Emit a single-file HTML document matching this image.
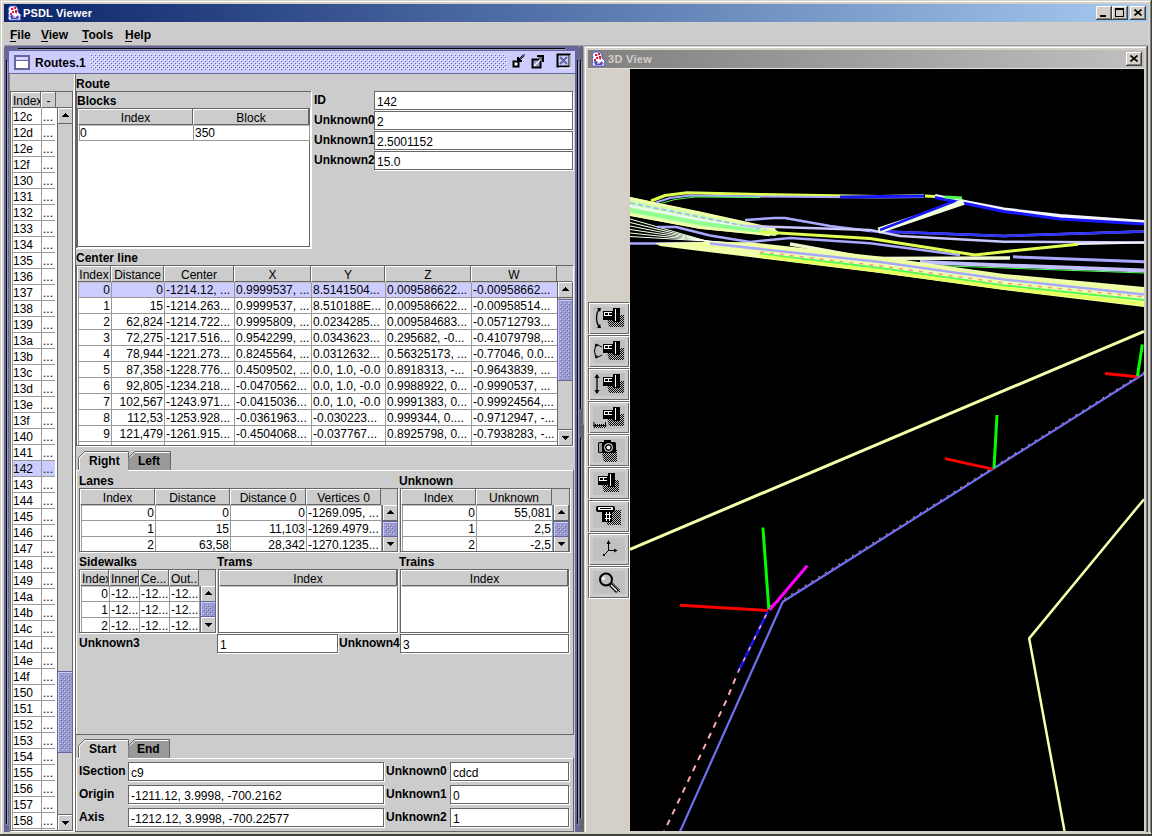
<!DOCTYPE html><html><head><meta charset="utf-8"><style>html,body{margin:0;padding:0;width:1152px;height:836px;overflow:hidden;background:#d4d0c8}body>div,body>svg{position:absolute}div{position:absolute;box-sizing:border-box}.t{font-family:"Liberation Sans",sans-serif;font-size:12px;line-height:16px;white-space:pre;color:#000}</style></head><body><div style="left:0px;top:0px;width:1152px;height:836px;background:#d4d0c8;"></div>
<div style="left:0px;top:0px;width:1151px;height:1px;background:#d4d0c8;"></div>
<div style="left:1px;top:1px;width:1149px;height:1px;background:#ffffff;"></div>
<div style="left:1px;top:1px;width:1px;height:833px;background:#ffffff;"></div>
<div style="left:1151px;top:0px;width:1px;height:836px;background:#404040;"></div>
<div style="left:1150px;top:1px;width:1px;height:834px;background:#808080;"></div>
<div style="left:4px;top:4px;width:1144px;height:18px;background:linear-gradient(to right,#0a246a,#a6caf0);"></div>
<svg style="position:absolute;left:6px;top:5px" width="16" height="16"><path d="M4 1h6l2 3v3l3 3-1 3 1 2H3l-1-2 1-2-1-3 1-2-1-2z" fill="#fff" stroke="#4a5ae0" stroke-width="1"/><path d="M5 3h2v2H5zM8 2h2v2H8zM6 6h2v2H6zM9 5h2v3H9zM4 8h2v2H4z" fill="#e8182a"/><path d="M7 4h1v1H7zM10 8h1v1h-1z" fill="#ff8090"/><path d="M4 11q2-2 4 0t4-1l1 2-1 2H5z" fill="#5a48b0"/><path d="M7 12h3" stroke="#fff" stroke-width="1"/></svg>
<div class="t" style="left:23px;top:5px;font-size:11px;font-weight:bold;color:#fff;letter-spacing:0.15px;">PSDL Viewer</div>
<div style="left:1096px;top:6px;width:16px;height:14px;background:#d4d0c8;"></div>
<div style="left:1096px;top:6px;width:15px;height:1px;background:#ffffff;"></div>
<div style="left:1096px;top:6px;width:1px;height:13px;background:#ffffff;"></div>
<div style="left:1096px;top:19px;width:16px;height:1px;background:#404040;"></div>
<div style="left:1111px;top:6px;width:1px;height:14px;background:#404040;"></div>
<div style="left:1097px;top:18px;width:14px;height:1px;background:#808080;"></div>
<div style="left:1110px;top:7px;width:1px;height:12px;background:#808080;"></div>
<div style="left:1100px;top:15px;width:6px;height:2px;background:#000;"></div>
<div style="left:1112px;top:6px;width:16px;height:14px;background:#d4d0c8;"></div>
<div style="left:1112px;top:6px;width:15px;height:1px;background:#ffffff;"></div>
<div style="left:1112px;top:6px;width:1px;height:13px;background:#ffffff;"></div>
<div style="left:1112px;top:19px;width:16px;height:1px;background:#404040;"></div>
<div style="left:1127px;top:6px;width:1px;height:14px;background:#404040;"></div>
<div style="left:1113px;top:18px;width:14px;height:1px;background:#808080;"></div>
<div style="left:1126px;top:7px;width:1px;height:12px;background:#808080;"></div>
<div style="left:1115px;top:8px;width:9px;height:9px;border:1px solid #000;border-top-width:2px;box-sizing:border-box;"></div>
<div style="left:1130px;top:6px;width:16px;height:14px;background:#d4d0c8;"></div>
<div style="left:1130px;top:6px;width:15px;height:1px;background:#ffffff;"></div>
<div style="left:1130px;top:6px;width:1px;height:13px;background:#ffffff;"></div>
<div style="left:1130px;top:19px;width:16px;height:1px;background:#404040;"></div>
<div style="left:1145px;top:6px;width:1px;height:14px;background:#404040;"></div>
<div style="left:1131px;top:18px;width:14px;height:1px;background:#808080;"></div>
<div style="left:1144px;top:7px;width:1px;height:12px;background:#808080;"></div>
<svg style="position:absolute;left:1134px;top:9px" width="8" height="7"><path d="M0.5 0.5L7.5 6.5M7.5 0.5L0.5 6.5" stroke="#000" stroke-width="1.6"/></svg>
<div style="left:4px;top:23px;width:1144px;height:22px;background:#cccccc;"></div>
<div class="t" style="left:10px;top:27px;font-weight:bold;">File</div>
<div class="t" style="left:41px;top:27px;font-weight:bold;">View</div>
<div class="t" style="left:82px;top:27px;font-weight:bold;">Tools</div>
<div class="t" style="left:125px;top:27px;font-weight:bold;">Help</div>
<div style="left:10px;top:41px;width:6px;height:1px;background:#000;"></div>
<div style="left:41px;top:41px;width:7px;height:1px;background:#000;"></div>
<div style="left:82px;top:41px;width:6px;height:1px;background:#000;"></div>
<div style="left:125px;top:41px;width:7px;height:1px;background:#000;"></div>
<div style="left:4px;top:45px;width:1144px;height:1px;background:#999999;"></div>
<div style="left:4px;top:46px;width:576px;height:786px;background:#666699;"></div>
<div style="left:4px;top:46px;width:1px;height:1px;background:#cccccc;"></div>
<div style="left:579px;top:46px;width:1px;height:1px;background:#cccccc;"></div>
<div style="left:18px;top:48px;width:547px;height:1px;background:#000;"></div>
<div style="left:19px;top:49px;width:547px;height:1px;background:#9999cc;"></div>
<div style="left:6px;top:60px;width:1px;height:764px;background:#000;"></div>
<div style="left:7px;top:61px;width:1px;height:764px;background:#9999cc;"></div>
<div style="left:577px;top:60px;width:1px;height:764px;background:#000;"></div>
<div style="left:578px;top:61px;width:1px;height:764px;background:#9999cc;"></div>
<div style="left:9px;top:51px;width:566px;height:22px;background:#ccccff;"></div>
<div style="left:9px;top:73px;width:566px;height:1px;background:#666699;"></div>
<div style="left:14px;top:55px;width:16px;height:15px;background:#666699;"></div>
<div style="left:15px;top:56px;width:14px;height:13px;background:#666699;border-radius:1px;"></div>
<div style="left:16px;top:57px;width:12px;height:3px;background:#ccccff;"></div>
<div style="left:17px;top:58px;width:1px;height:1px;background:#ffffff;"></div>
<div style="left:20px;top:58px;width:1px;height:1px;background:#ffffff;"></div>
<div style="left:23px;top:58px;width:1px;height:1px;background:#ffffff;"></div>
<div style="left:26px;top:58px;width:1px;height:1px;background:#ffffff;"></div>
<div style="left:16px;top:61px;width:12px;height:7px;background:#ffffff;"></div>
<div class="t" style="left:35px;top:55px;font-weight:bold;">Routes.1</div>
<svg style="position:absolute;left:90px;top:54px;width:417px;height:16px;background:#ccccff;" width="417" height="16"><defs><pattern id="tb" width="4" height="4" patternUnits="userSpaceOnUse"><rect x="0" y="0" width="1" height="1" fill="#ffffff"/><rect x="2" y="2" width="1" height="1" fill="#ffffff"/><rect x="1" y="1" width="1" height="1" fill="#666699"/><rect x="3" y="3" width="1" height="1" fill="#666699"/></pattern></defs><rect width="417" height="16" fill="url(#tb)"/></svg>
<svg style="position:absolute;left:510px;top:53px" width="64" height="18"><rect x="3.5" y="8.5" width="5" height="5" fill="#fff" stroke="#000" stroke-width="2"/><path d="M8 8L14 2" stroke="#000" stroke-width="2"/><path d="M8 4v4h4" fill="none" stroke="#000" stroke-width="2"/><path d="M10 6l5-5" stroke="#666699" stroke-width="1"/><rect x="22.5" y="6.5" width="8" height="8" fill="#9999cc" stroke="#000" stroke-width="2"/><path d="M24 13L32 5" stroke="#fff" stroke-width="1.2"/><path d="M27 3h6v6" fill="#666699" stroke="#000" stroke-width="2"/><rect x="47.5" y="1.5" width="12" height="12" fill="#ccccff" stroke="#000" stroke-width="2"/><path d="M50 4L57 11M57 4L50 11" stroke="#666699" stroke-width="2"/><path d="M49 15h12M60 2v13" stroke="#fff" stroke-width="1"/></svg>
<div style="left:9px;top:74px;width:566px;height:758px;background:#cccccc;"></div>
<div style="left:9px;top:74px;width:1px;height:758px;background:#8a8a8a;"></div>
<div style="left:10px;top:91px;width:63px;height:1px;background:#666666;"></div>
<div style="left:10px;top:91px;width:1px;height:740px;background:#666666;"></div>
<div style="left:72px;top:91px;width:1px;height:740px;background:#666666;"></div>
<div style="left:10px;top:830px;width:63px;height:1px;background:#666666;"></div>
<div style="left:73px;top:92px;width:1px;height:740px;background:#ffffff;"></div>
<div style="left:11px;top:831px;width:63px;height:1px;background:#ffffff;"></div>
<div style="left:11px;top:92px;width:30px;height:16px;background:#cccccc;"></div>
<div style="left:11px;top:92px;width:29px;height:1px;background:#ffffff;"></div>
<div style="left:11px;top:92px;width:1px;height:15px;background:#ffffff;"></div>
<div style="left:40px;top:92px;width:1px;height:16px;background:#666666;"></div>
<div style="left:12px;top:107px;width:29px;height:1px;background:#666666;"></div>
<div class="t" style="left:13px;top:93px;width:27px;text-align:left;overflow:hidden;">Index</div>
<div style="left:41px;top:92px;width:15px;height:16px;background:#cccccc;"></div>
<div style="left:41px;top:92px;width:14px;height:1px;background:#ffffff;"></div>
<div style="left:41px;top:92px;width:1px;height:15px;background:#ffffff;"></div>
<div style="left:55px;top:92px;width:1px;height:16px;background:#666666;"></div>
<div style="left:42px;top:107px;width:14px;height:1px;background:#666666;"></div>
<div class="t" style="left:42px;top:93px;width:13px;text-align:center;overflow:hidden;">-</div>
<div style="left:56px;top:92px;width:16px;height:16px;background:#cccccc;"></div>
<div style="left:56px;top:107px;width:16px;height:1px;background:#666666;"></div>
<div style="left:11px;top:108px;width:46px;height:722px;background:#ffffff;"></div>
<div style="left:12px;top:108px;width:1px;height:722px;background:#999999;"></div>
<div class="t" style="left:13px;top:109px;width:28px;text-align:left;overflow:hidden;">12c</div>
<div class="t" style="left:43px;top:109px;width:13px;text-align:left;overflow:hidden;">...</div>
<div style="left:12px;top:124px;width:43px;height:1px;background:#999999;"></div>
<div class="t" style="left:13px;top:125px;width:28px;text-align:left;overflow:hidden;">12d</div>
<div class="t" style="left:43px;top:125px;width:13px;text-align:left;overflow:hidden;">...</div>
<div style="left:12px;top:140px;width:43px;height:1px;background:#999999;"></div>
<div class="t" style="left:13px;top:141px;width:28px;text-align:left;overflow:hidden;">12e</div>
<div class="t" style="left:43px;top:141px;width:13px;text-align:left;overflow:hidden;">...</div>
<div style="left:12px;top:156px;width:43px;height:1px;background:#999999;"></div>
<div class="t" style="left:13px;top:157px;width:28px;text-align:left;overflow:hidden;">12f</div>
<div class="t" style="left:43px;top:157px;width:13px;text-align:left;overflow:hidden;">...</div>
<div style="left:12px;top:172px;width:43px;height:1px;background:#999999;"></div>
<div class="t" style="left:13px;top:173px;width:28px;text-align:left;overflow:hidden;">130</div>
<div class="t" style="left:43px;top:173px;width:13px;text-align:left;overflow:hidden;">...</div>
<div style="left:12px;top:188px;width:43px;height:1px;background:#999999;"></div>
<div class="t" style="left:13px;top:189px;width:28px;text-align:left;overflow:hidden;">131</div>
<div class="t" style="left:43px;top:189px;width:13px;text-align:left;overflow:hidden;">...</div>
<div style="left:12px;top:204px;width:43px;height:1px;background:#999999;"></div>
<div class="t" style="left:13px;top:205px;width:28px;text-align:left;overflow:hidden;">132</div>
<div class="t" style="left:43px;top:205px;width:13px;text-align:left;overflow:hidden;">...</div>
<div style="left:12px;top:220px;width:43px;height:1px;background:#999999;"></div>
<div class="t" style="left:13px;top:221px;width:28px;text-align:left;overflow:hidden;">133</div>
<div class="t" style="left:43px;top:221px;width:13px;text-align:left;overflow:hidden;">...</div>
<div style="left:12px;top:236px;width:43px;height:1px;background:#999999;"></div>
<div class="t" style="left:13px;top:237px;width:28px;text-align:left;overflow:hidden;">134</div>
<div class="t" style="left:43px;top:237px;width:13px;text-align:left;overflow:hidden;">...</div>
<div style="left:12px;top:252px;width:43px;height:1px;background:#999999;"></div>
<div class="t" style="left:13px;top:253px;width:28px;text-align:left;overflow:hidden;">135</div>
<div class="t" style="left:43px;top:253px;width:13px;text-align:left;overflow:hidden;">...</div>
<div style="left:12px;top:268px;width:43px;height:1px;background:#999999;"></div>
<div class="t" style="left:13px;top:269px;width:28px;text-align:left;overflow:hidden;">136</div>
<div class="t" style="left:43px;top:269px;width:13px;text-align:left;overflow:hidden;">...</div>
<div style="left:12px;top:284px;width:43px;height:1px;background:#999999;"></div>
<div class="t" style="left:13px;top:285px;width:28px;text-align:left;overflow:hidden;">137</div>
<div class="t" style="left:43px;top:285px;width:13px;text-align:left;overflow:hidden;">...</div>
<div style="left:12px;top:300px;width:43px;height:1px;background:#999999;"></div>
<div class="t" style="left:13px;top:301px;width:28px;text-align:left;overflow:hidden;">138</div>
<div class="t" style="left:43px;top:301px;width:13px;text-align:left;overflow:hidden;">...</div>
<div style="left:12px;top:316px;width:43px;height:1px;background:#999999;"></div>
<div class="t" style="left:13px;top:317px;width:28px;text-align:left;overflow:hidden;">139</div>
<div class="t" style="left:43px;top:317px;width:13px;text-align:left;overflow:hidden;">...</div>
<div style="left:12px;top:332px;width:43px;height:1px;background:#999999;"></div>
<div class="t" style="left:13px;top:333px;width:28px;text-align:left;overflow:hidden;">13a</div>
<div class="t" style="left:43px;top:333px;width:13px;text-align:left;overflow:hidden;">...</div>
<div style="left:12px;top:348px;width:43px;height:1px;background:#999999;"></div>
<div class="t" style="left:13px;top:349px;width:28px;text-align:left;overflow:hidden;">13b</div>
<div class="t" style="left:43px;top:349px;width:13px;text-align:left;overflow:hidden;">...</div>
<div style="left:12px;top:364px;width:43px;height:1px;background:#999999;"></div>
<div class="t" style="left:13px;top:365px;width:28px;text-align:left;overflow:hidden;">13c</div>
<div class="t" style="left:43px;top:365px;width:13px;text-align:left;overflow:hidden;">...</div>
<div style="left:12px;top:380px;width:43px;height:1px;background:#999999;"></div>
<div class="t" style="left:13px;top:381px;width:28px;text-align:left;overflow:hidden;">13d</div>
<div class="t" style="left:43px;top:381px;width:13px;text-align:left;overflow:hidden;">...</div>
<div style="left:12px;top:396px;width:43px;height:1px;background:#999999;"></div>
<div class="t" style="left:13px;top:397px;width:28px;text-align:left;overflow:hidden;">13e</div>
<div class="t" style="left:43px;top:397px;width:13px;text-align:left;overflow:hidden;">...</div>
<div style="left:12px;top:412px;width:43px;height:1px;background:#999999;"></div>
<div class="t" style="left:13px;top:413px;width:28px;text-align:left;overflow:hidden;">13f</div>
<div class="t" style="left:43px;top:413px;width:13px;text-align:left;overflow:hidden;">...</div>
<div style="left:12px;top:428px;width:43px;height:1px;background:#999999;"></div>
<div class="t" style="left:13px;top:429px;width:28px;text-align:left;overflow:hidden;">140</div>
<div class="t" style="left:43px;top:429px;width:13px;text-align:left;overflow:hidden;">...</div>
<div style="left:12px;top:444px;width:43px;height:1px;background:#999999;"></div>
<div class="t" style="left:13px;top:445px;width:28px;text-align:left;overflow:hidden;">141</div>
<div class="t" style="left:43px;top:445px;width:13px;text-align:left;overflow:hidden;">...</div>
<div style="left:12px;top:460px;width:43px;height:1px;background:#999999;"></div>
<div style="left:13px;top:461px;width:28px;height:15px;background:#ccccff;"></div>
<div style="left:42px;top:461px;width:13px;height:15px;background:#ccccff;"></div>
<div class="t" style="left:13px;top:461px;width:28px;text-align:left;overflow:hidden;">142</div>
<div class="t" style="left:43px;top:461px;width:13px;text-align:left;overflow:hidden;">...</div>
<div style="left:12px;top:476px;width:43px;height:1px;background:#999999;"></div>
<div class="t" style="left:13px;top:477px;width:28px;text-align:left;overflow:hidden;">143</div>
<div class="t" style="left:43px;top:477px;width:13px;text-align:left;overflow:hidden;">...</div>
<div style="left:12px;top:492px;width:43px;height:1px;background:#999999;"></div>
<div class="t" style="left:13px;top:493px;width:28px;text-align:left;overflow:hidden;">144</div>
<div class="t" style="left:43px;top:493px;width:13px;text-align:left;overflow:hidden;">...</div>
<div style="left:12px;top:508px;width:43px;height:1px;background:#999999;"></div>
<div class="t" style="left:13px;top:509px;width:28px;text-align:left;overflow:hidden;">145</div>
<div class="t" style="left:43px;top:509px;width:13px;text-align:left;overflow:hidden;">...</div>
<div style="left:12px;top:524px;width:43px;height:1px;background:#999999;"></div>
<div class="t" style="left:13px;top:525px;width:28px;text-align:left;overflow:hidden;">146</div>
<div class="t" style="left:43px;top:525px;width:13px;text-align:left;overflow:hidden;">...</div>
<div style="left:12px;top:540px;width:43px;height:1px;background:#999999;"></div>
<div class="t" style="left:13px;top:541px;width:28px;text-align:left;overflow:hidden;">147</div>
<div class="t" style="left:43px;top:541px;width:13px;text-align:left;overflow:hidden;">...</div>
<div style="left:12px;top:556px;width:43px;height:1px;background:#999999;"></div>
<div class="t" style="left:13px;top:557px;width:28px;text-align:left;overflow:hidden;">148</div>
<div class="t" style="left:43px;top:557px;width:13px;text-align:left;overflow:hidden;">...</div>
<div style="left:12px;top:572px;width:43px;height:1px;background:#999999;"></div>
<div class="t" style="left:13px;top:573px;width:28px;text-align:left;overflow:hidden;">149</div>
<div class="t" style="left:43px;top:573px;width:13px;text-align:left;overflow:hidden;">...</div>
<div style="left:12px;top:588px;width:43px;height:1px;background:#999999;"></div>
<div class="t" style="left:13px;top:589px;width:28px;text-align:left;overflow:hidden;">14a</div>
<div class="t" style="left:43px;top:589px;width:13px;text-align:left;overflow:hidden;">...</div>
<div style="left:12px;top:604px;width:43px;height:1px;background:#999999;"></div>
<div class="t" style="left:13px;top:605px;width:28px;text-align:left;overflow:hidden;">14b</div>
<div class="t" style="left:43px;top:605px;width:13px;text-align:left;overflow:hidden;">...</div>
<div style="left:12px;top:620px;width:43px;height:1px;background:#999999;"></div>
<div class="t" style="left:13px;top:621px;width:28px;text-align:left;overflow:hidden;">14c</div>
<div class="t" style="left:43px;top:621px;width:13px;text-align:left;overflow:hidden;">...</div>
<div style="left:12px;top:636px;width:43px;height:1px;background:#999999;"></div>
<div class="t" style="left:13px;top:637px;width:28px;text-align:left;overflow:hidden;">14d</div>
<div class="t" style="left:43px;top:637px;width:13px;text-align:left;overflow:hidden;">...</div>
<div style="left:12px;top:652px;width:43px;height:1px;background:#999999;"></div>
<div class="t" style="left:13px;top:653px;width:28px;text-align:left;overflow:hidden;">14e</div>
<div class="t" style="left:43px;top:653px;width:13px;text-align:left;overflow:hidden;">...</div>
<div style="left:12px;top:668px;width:43px;height:1px;background:#999999;"></div>
<div class="t" style="left:13px;top:669px;width:28px;text-align:left;overflow:hidden;">14f</div>
<div class="t" style="left:43px;top:669px;width:13px;text-align:left;overflow:hidden;">...</div>
<div style="left:12px;top:684px;width:43px;height:1px;background:#999999;"></div>
<div class="t" style="left:13px;top:685px;width:28px;text-align:left;overflow:hidden;">150</div>
<div class="t" style="left:43px;top:685px;width:13px;text-align:left;overflow:hidden;">...</div>
<div style="left:12px;top:700px;width:43px;height:1px;background:#999999;"></div>
<div class="t" style="left:13px;top:701px;width:28px;text-align:left;overflow:hidden;">151</div>
<div class="t" style="left:43px;top:701px;width:13px;text-align:left;overflow:hidden;">...</div>
<div style="left:12px;top:716px;width:43px;height:1px;background:#999999;"></div>
<div class="t" style="left:13px;top:717px;width:28px;text-align:left;overflow:hidden;">152</div>
<div class="t" style="left:43px;top:717px;width:13px;text-align:left;overflow:hidden;">...</div>
<div style="left:12px;top:732px;width:43px;height:1px;background:#999999;"></div>
<div class="t" style="left:13px;top:733px;width:28px;text-align:left;overflow:hidden;">153</div>
<div class="t" style="left:43px;top:733px;width:13px;text-align:left;overflow:hidden;">...</div>
<div style="left:12px;top:748px;width:43px;height:1px;background:#999999;"></div>
<div class="t" style="left:13px;top:749px;width:28px;text-align:left;overflow:hidden;">154</div>
<div class="t" style="left:43px;top:749px;width:13px;text-align:left;overflow:hidden;">...</div>
<div style="left:12px;top:764px;width:43px;height:1px;background:#999999;"></div>
<div class="t" style="left:13px;top:765px;width:28px;text-align:left;overflow:hidden;">155</div>
<div class="t" style="left:43px;top:765px;width:13px;text-align:left;overflow:hidden;">...</div>
<div style="left:12px;top:780px;width:43px;height:1px;background:#999999;"></div>
<div class="t" style="left:13px;top:781px;width:28px;text-align:left;overflow:hidden;">156</div>
<div class="t" style="left:43px;top:781px;width:13px;text-align:left;overflow:hidden;">...</div>
<div style="left:12px;top:796px;width:43px;height:1px;background:#999999;"></div>
<div class="t" style="left:13px;top:797px;width:28px;text-align:left;overflow:hidden;">157</div>
<div class="t" style="left:43px;top:797px;width:13px;text-align:left;overflow:hidden;">...</div>
<div style="left:12px;top:812px;width:43px;height:1px;background:#999999;"></div>
<div class="t" style="left:13px;top:813px;width:28px;text-align:left;overflow:hidden;">158</div>
<div class="t" style="left:43px;top:813px;width:13px;text-align:left;overflow:hidden;">...</div>
<div style="left:12px;top:828px;width:43px;height:1px;background:#999999;"></div>
<div style="left:41px;top:108px;width:1px;height:722px;background:#999999;"></div>
<div style="left:12px;top:830px;width:61px;height:1px;background:#666666;"></div>
<div style="left:57px;top:108px;width:16px;height:722px;background:#cccccc;"></div>
<div style="left:57px;top:108px;width:1px;height:722px;background:#666666;"></div>
<div style="left:72px;top:108px;width:1px;height:722px;background:#666666;"></div>
<div style="left:58px;top:108px;width:1px;height:15px;background:#ffffff;"></div>
<div style="left:58px;top:108px;width:14px;height:1px;background:#ffffff;"></div>
<div style="left:58px;top:123px;width:14px;height:1px;background:#666666;"></div>
<div style="left:65px;top:113px;width:1px;height:1px;background:#000;"></div>
<div style="left:64px;top:114px;width:3px;height:1px;background:#000;"></div>
<div style="left:63px;top:115px;width:5px;height:1px;background:#000;"></div>
<div style="left:62px;top:116px;width:7px;height:1px;background:#000;"></div>
<div style="left:58px;top:814px;width:14px;height:1px;background:#666666;"></div>
<div style="left:59px;top:815px;width:13px;height:1px;background:#ffffff;"></div>
<div style="left:58px;top:815px;width:1px;height:15px;background:#ffffff;"></div>
<div style="left:65px;top:824px;width:1px;height:1px;background:#000;"></div>
<div style="left:64px;top:823px;width:3px;height:1px;background:#000;"></div>
<div style="left:63px;top:822px;width:5px;height:1px;background:#000;"></div>
<div style="left:62px;top:821px;width:7px;height:1px;background:#000;"></div>
<div style="left:57px;top:671px;width:16px;height:82px;background:#9999cc;"></div>
<div style="left:57px;top:671px;width:16px;height:1px;background:#666699;"></div>
<div style="left:57px;top:752px;width:16px;height:1px;background:#666699;"></div>
<div style="left:57px;top:671px;width:1px;height:82px;background:#666699;"></div>
<div style="left:72px;top:671px;width:1px;height:82px;background:#666699;"></div>
<div style="left:58px;top:672px;width:14px;height:1px;background:#ccccff;"></div>
<div style="left:58px;top:672px;width:1px;height:80px;background:#ccccff;"></div>
<svg style="position:absolute;left:60px;top:675px;width:10px;height:75px;" width="10" height="75"><defs><pattern id="p1" width="4" height="4" patternUnits="userSpaceOnUse"><rect x="0" y="0" width="1" height="1" fill="#ccccff"/><rect x="2" y="2" width="1" height="1" fill="#ccccff"/><rect x="1" y="1" width="1" height="1" fill="#666699"/><rect x="3" y="3" width="1" height="1" fill="#666699"/></pattern></defs><rect width="10" height="75" fill="url(#p1)"/></svg>
<div style="left:73px;top:91px;width:1px;height:741px;background:#ffffff;"></div>
<div style="left:74px;top:74px;width:1px;height:758px;background:#ffffff;"></div>
<div style="left:75px;top:74px;width:1px;height:758px;background:#666666;"></div>
<div class="t" style="left:76px;top:76px;font-weight:bold;">Route</div>
<div style="left:76px;top:91px;width:235px;height:1px;background:#666666;"></div>
<div style="left:76px;top:91px;width:1px;height:157px;background:#666666;"></div>
<div style="left:311px;top:91px;width:1px;height:158px;background:#ffffff;"></div>
<div style="left:76px;top:248px;width:236px;height:1px;background:#ffffff;"></div>
<div class="t" style="left:77px;top:93px;font-weight:bold;">Blocks</div>
<div style="left:77px;top:108px;width:233px;height:1px;background:#666666;"></div>
<div style="left:77px;top:108px;width:1px;height:139px;background:#666666;"></div>
<div style="left:309px;top:108px;width:1px;height:139px;background:#666666;"></div>
<div style="left:77px;top:246px;width:233px;height:1px;background:#666666;"></div>
<div style="left:310px;top:109px;width:1px;height:139px;background:#ffffff;"></div>
<div style="left:78px;top:247px;width:233px;height:1px;background:#ffffff;"></div>
<div style="left:78px;top:109px;width:115px;height:16px;background:#cccccc;"></div>
<div style="left:78px;top:109px;width:114px;height:1px;background:#ffffff;"></div>
<div style="left:78px;top:109px;width:1px;height:15px;background:#ffffff;"></div>
<div style="left:192px;top:109px;width:1px;height:16px;background:#666666;"></div>
<div style="left:79px;top:124px;width:114px;height:1px;background:#666666;"></div>
<div class="t" style="left:79px;top:110px;width:113px;text-align:center;overflow:hidden;">Index</div>
<div style="left:193px;top:109px;width:116px;height:16px;background:#cccccc;"></div>
<div style="left:193px;top:109px;width:115px;height:1px;background:#ffffff;"></div>
<div style="left:193px;top:109px;width:1px;height:15px;background:#ffffff;"></div>
<div style="left:308px;top:109px;width:1px;height:16px;background:#666666;"></div>
<div style="left:194px;top:124px;width:115px;height:1px;background:#666666;"></div>
<div class="t" style="left:194px;top:110px;width:114px;text-align:center;overflow:hidden;">Block</div>
<div style="left:78px;top:125px;width:231px;height:121px;background:#ffffff;"></div>
<div style="left:79px;top:125px;width:231px;height:1px;background:#c0c0c0;"></div>
<div class="t" style="left:80px;top:125px;width:114px;text-align:left;overflow:hidden;">0</div>
<div class="t" style="left:195px;top:125px;width:115px;text-align:left;overflow:hidden;">350</div>
<div style="left:79px;top:140px;width:231px;height:1px;background:#999999;"></div>
<div style="left:79px;top:125px;width:1px;height:16px;background:#999999;"></div>
<div style="left:193px;top:125px;width:1px;height:16px;background:#999999;"></div>
<div style="left:309px;top:125px;width:1px;height:16px;background:#999999;"></div>
<div class="t" style="left:314px;top:92px;font-weight:bold;">ID</div>
<div style="left:374px;top:91px;width:200px;height:20px;background:#ffffff;"></div>
<div style="left:374px;top:91px;width:199px;height:1px;background:#666666;"></div>
<div style="left:374px;top:91px;width:1px;height:19px;background:#666666;"></div>
<div style="left:375px;top:109px;width:198px;height:1px;background:#666666;"></div>
<div style="left:572px;top:92px;width:1px;height:18px;background:#666666;"></div>
<div style="left:375px;top:110px;width:199px;height:1px;background:#ffffff;"></div>
<div style="left:573px;top:92px;width:1px;height:19px;background:#ffffff;"></div>
<div style="left:374px;top:110px;width:1px;height:1px;background:#cccccc;"></div>
<div style="left:573px;top:91px;width:1px;height:1px;background:#cccccc;"></div>
<div class="t" style="left:377px;top:94px;">142</div>
<div class="t" style="left:314px;top:112px;font-weight:bold;">Unknown0</div>
<div style="left:374px;top:111px;width:200px;height:20px;background:#ffffff;"></div>
<div style="left:374px;top:111px;width:199px;height:1px;background:#666666;"></div>
<div style="left:374px;top:111px;width:1px;height:19px;background:#666666;"></div>
<div style="left:375px;top:129px;width:198px;height:1px;background:#666666;"></div>
<div style="left:572px;top:112px;width:1px;height:18px;background:#666666;"></div>
<div style="left:375px;top:130px;width:199px;height:1px;background:#ffffff;"></div>
<div style="left:573px;top:112px;width:1px;height:19px;background:#ffffff;"></div>
<div style="left:374px;top:130px;width:1px;height:1px;background:#cccccc;"></div>
<div style="left:573px;top:111px;width:1px;height:1px;background:#cccccc;"></div>
<div class="t" style="left:377px;top:114px;">2</div>
<div class="t" style="left:314px;top:132px;font-weight:bold;">Unknown1</div>
<div style="left:374px;top:131px;width:200px;height:20px;background:#ffffff;"></div>
<div style="left:374px;top:131px;width:199px;height:1px;background:#666666;"></div>
<div style="left:374px;top:131px;width:1px;height:19px;background:#666666;"></div>
<div style="left:375px;top:149px;width:198px;height:1px;background:#666666;"></div>
<div style="left:572px;top:132px;width:1px;height:18px;background:#666666;"></div>
<div style="left:375px;top:150px;width:199px;height:1px;background:#ffffff;"></div>
<div style="left:573px;top:132px;width:1px;height:19px;background:#ffffff;"></div>
<div style="left:374px;top:150px;width:1px;height:1px;background:#cccccc;"></div>
<div style="left:573px;top:131px;width:1px;height:1px;background:#cccccc;"></div>
<div class="t" style="left:377px;top:134px;">2.5001152</div>
<div class="t" style="left:314px;top:152px;font-weight:bold;">Unknown2</div>
<div style="left:374px;top:151px;width:200px;height:20px;background:#ffffff;"></div>
<div style="left:374px;top:151px;width:199px;height:1px;background:#666666;"></div>
<div style="left:374px;top:151px;width:1px;height:19px;background:#666666;"></div>
<div style="left:375px;top:169px;width:198px;height:1px;background:#666666;"></div>
<div style="left:572px;top:152px;width:1px;height:18px;background:#666666;"></div>
<div style="left:375px;top:170px;width:199px;height:1px;background:#ffffff;"></div>
<div style="left:573px;top:152px;width:1px;height:19px;background:#ffffff;"></div>
<div style="left:374px;top:170px;width:1px;height:1px;background:#cccccc;"></div>
<div style="left:573px;top:151px;width:1px;height:1px;background:#cccccc;"></div>
<div class="t" style="left:377px;top:154px;">15.0</div>
<div class="t" style="left:76px;top:250px;font-weight:bold;">Center line</div>
<div style="left:76px;top:265px;width:497px;height:1px;background:#666666;"></div>
<div style="left:76px;top:265px;width:1px;height:181px;background:#666666;"></div>
<div style="left:572px;top:265px;width:1px;height:181px;background:#666666;"></div>
<div style="left:76px;top:445px;width:497px;height:1px;background:#666666;"></div>
<div style="left:573px;top:266px;width:1px;height:181px;background:#ffffff;"></div>
<div style="left:77px;top:446px;width:497px;height:1px;background:#ffffff;"></div>
<div style="left:77px;top:266px;width:34px;height:16px;background:#cccccc;"></div>
<div style="left:77px;top:266px;width:33px;height:1px;background:#ffffff;"></div>
<div style="left:77px;top:266px;width:1px;height:15px;background:#ffffff;"></div>
<div style="left:110px;top:266px;width:1px;height:16px;background:#666666;"></div>
<div style="left:78px;top:281px;width:33px;height:1px;background:#666666;"></div>
<div class="t" style="left:78px;top:267px;width:32px;text-align:center;overflow:hidden;">Index</div>
<div style="left:111px;top:266px;width:53px;height:16px;background:#cccccc;"></div>
<div style="left:111px;top:266px;width:52px;height:1px;background:#ffffff;"></div>
<div style="left:111px;top:266px;width:1px;height:15px;background:#ffffff;"></div>
<div style="left:163px;top:266px;width:1px;height:16px;background:#666666;"></div>
<div style="left:112px;top:281px;width:52px;height:1px;background:#666666;"></div>
<div class="t" style="left:112px;top:267px;width:51px;text-align:center;overflow:hidden;">Distance</div>
<div style="left:164px;top:266px;width:70px;height:16px;background:#cccccc;"></div>
<div style="left:164px;top:266px;width:69px;height:1px;background:#ffffff;"></div>
<div style="left:164px;top:266px;width:1px;height:15px;background:#ffffff;"></div>
<div style="left:233px;top:266px;width:1px;height:16px;background:#666666;"></div>
<div style="left:165px;top:281px;width:69px;height:1px;background:#666666;"></div>
<div class="t" style="left:165px;top:267px;width:68px;text-align:center;overflow:hidden;">Center</div>
<div style="left:234px;top:266px;width:77px;height:16px;background:#cccccc;"></div>
<div style="left:234px;top:266px;width:76px;height:1px;background:#ffffff;"></div>
<div style="left:234px;top:266px;width:1px;height:15px;background:#ffffff;"></div>
<div style="left:310px;top:266px;width:1px;height:16px;background:#666666;"></div>
<div style="left:235px;top:281px;width:76px;height:1px;background:#666666;"></div>
<div class="t" style="left:235px;top:267px;width:75px;text-align:center;overflow:hidden;">X</div>
<div style="left:311px;top:266px;width:74px;height:16px;background:#cccccc;"></div>
<div style="left:311px;top:266px;width:73px;height:1px;background:#ffffff;"></div>
<div style="left:311px;top:266px;width:1px;height:15px;background:#ffffff;"></div>
<div style="left:384px;top:266px;width:1px;height:16px;background:#666666;"></div>
<div style="left:312px;top:281px;width:73px;height:1px;background:#666666;"></div>
<div class="t" style="left:312px;top:267px;width:72px;text-align:center;overflow:hidden;">Y</div>
<div style="left:385px;top:266px;width:86px;height:16px;background:#cccccc;"></div>
<div style="left:385px;top:266px;width:85px;height:1px;background:#ffffff;"></div>
<div style="left:385px;top:266px;width:1px;height:15px;background:#ffffff;"></div>
<div style="left:470px;top:266px;width:1px;height:16px;background:#666666;"></div>
<div style="left:386px;top:281px;width:85px;height:1px;background:#666666;"></div>
<div class="t" style="left:386px;top:267px;width:84px;text-align:center;overflow:hidden;">Z</div>
<div style="left:471px;top:266px;width:86px;height:16px;background:#cccccc;"></div>
<div style="left:471px;top:266px;width:85px;height:1px;background:#ffffff;"></div>
<div style="left:471px;top:266px;width:1px;height:15px;background:#ffffff;"></div>
<div style="left:556px;top:266px;width:1px;height:16px;background:#666666;"></div>
<div style="left:472px;top:281px;width:85px;height:1px;background:#666666;"></div>
<div class="t" style="left:472px;top:267px;width:84px;text-align:center;overflow:hidden;">W</div>
<div style="left:77px;top:282px;width:480px;height:163px;background:#ffffff;"></div>
<div style="left:78px;top:282px;width:480px;height:1px;background:#c0c0c0;"></div>
<div style="left:79px;top:283px;width:479px;height:14px;background:#ccccff;"></div>
<div class="t" style="left:79px;top:282px;width:31px;text-align:right;overflow:hidden;">0</div>
<div class="t" style="left:113px;top:282px;width:50px;text-align:right;overflow:hidden;">0</div>
<div class="t" style="left:166px;top:282px;width:69px;text-align:left;overflow:hidden;">-1214.12, ...</div>
<div class="t" style="left:236px;top:282px;width:76px;text-align:left;overflow:hidden;">0.9999537, ...</div>
<div class="t" style="left:313px;top:282px;width:73px;text-align:left;overflow:hidden;">8.5141504...</div>
<div class="t" style="left:387px;top:282px;width:85px;text-align:left;overflow:hidden;">0.009586622...</div>
<div class="t" style="left:473px;top:282px;width:85px;text-align:left;overflow:hidden;">-0.00958662...</div>
<div style="left:78px;top:297px;width:480px;height:1px;background:#999999;"></div>
<div class="t" style="left:79px;top:298px;width:31px;text-align:right;overflow:hidden;">1</div>
<div class="t" style="left:113px;top:298px;width:50px;text-align:right;overflow:hidden;">15</div>
<div class="t" style="left:166px;top:298px;width:69px;text-align:left;overflow:hidden;">-1214.263...</div>
<div class="t" style="left:236px;top:298px;width:76px;text-align:left;overflow:hidden;">0.9999537, ...</div>
<div class="t" style="left:313px;top:298px;width:73px;text-align:left;overflow:hidden;">8.510188E...</div>
<div class="t" style="left:387px;top:298px;width:85px;text-align:left;overflow:hidden;">0.009586622...</div>
<div class="t" style="left:473px;top:298px;width:85px;text-align:left;overflow:hidden;">-0.00958514...</div>
<div style="left:78px;top:313px;width:480px;height:1px;background:#999999;"></div>
<div class="t" style="left:79px;top:314px;width:31px;text-align:right;overflow:hidden;">2</div>
<div class="t" style="left:113px;top:314px;width:50px;text-align:right;overflow:hidden;">62,824</div>
<div class="t" style="left:166px;top:314px;width:69px;text-align:left;overflow:hidden;">-1214.722...</div>
<div class="t" style="left:236px;top:314px;width:76px;text-align:left;overflow:hidden;">0.9995809, ...</div>
<div class="t" style="left:313px;top:314px;width:73px;text-align:left;overflow:hidden;">0.0234285...</div>
<div class="t" style="left:387px;top:314px;width:85px;text-align:left;overflow:hidden;">0.009584683...</div>
<div class="t" style="left:473px;top:314px;width:85px;text-align:left;overflow:hidden;">-0.05712793...</div>
<div style="left:78px;top:329px;width:480px;height:1px;background:#999999;"></div>
<div class="t" style="left:79px;top:330px;width:31px;text-align:right;overflow:hidden;">3</div>
<div class="t" style="left:113px;top:330px;width:50px;text-align:right;overflow:hidden;">72,275</div>
<div class="t" style="left:166px;top:330px;width:69px;text-align:left;overflow:hidden;">-1217.516...</div>
<div class="t" style="left:236px;top:330px;width:76px;text-align:left;overflow:hidden;">0.9542299, ...</div>
<div class="t" style="left:313px;top:330px;width:73px;text-align:left;overflow:hidden;">0.0343623...</div>
<div class="t" style="left:387px;top:330px;width:85px;text-align:left;overflow:hidden;">0.295682, -0...</div>
<div class="t" style="left:473px;top:330px;width:85px;text-align:left;overflow:hidden;">-0.41079798,...</div>
<div style="left:78px;top:345px;width:480px;height:1px;background:#999999;"></div>
<div class="t" style="left:79px;top:346px;width:31px;text-align:right;overflow:hidden;">4</div>
<div class="t" style="left:113px;top:346px;width:50px;text-align:right;overflow:hidden;">78,944</div>
<div class="t" style="left:166px;top:346px;width:69px;text-align:left;overflow:hidden;">-1221.273...</div>
<div class="t" style="left:236px;top:346px;width:76px;text-align:left;overflow:hidden;">0.8245564, ...</div>
<div class="t" style="left:313px;top:346px;width:73px;text-align:left;overflow:hidden;">0.0312632...</div>
<div class="t" style="left:387px;top:346px;width:85px;text-align:left;overflow:hidden;">0.56325173, ...</div>
<div class="t" style="left:473px;top:346px;width:85px;text-align:left;overflow:hidden;">-0.77046, 0.0...</div>
<div style="left:78px;top:361px;width:480px;height:1px;background:#999999;"></div>
<div class="t" style="left:79px;top:362px;width:31px;text-align:right;overflow:hidden;">5</div>
<div class="t" style="left:113px;top:362px;width:50px;text-align:right;overflow:hidden;">87,358</div>
<div class="t" style="left:166px;top:362px;width:69px;text-align:left;overflow:hidden;">-1228.776...</div>
<div class="t" style="left:236px;top:362px;width:76px;text-align:left;overflow:hidden;">0.4509502, ...</div>
<div class="t" style="left:313px;top:362px;width:73px;text-align:left;overflow:hidden;">0.0, 1.0, -0.0</div>
<div class="t" style="left:387px;top:362px;width:85px;text-align:left;overflow:hidden;">0.8918313, -...</div>
<div class="t" style="left:473px;top:362px;width:85px;text-align:left;overflow:hidden;">-0.9643839, ...</div>
<div style="left:78px;top:377px;width:480px;height:1px;background:#999999;"></div>
<div class="t" style="left:79px;top:378px;width:31px;text-align:right;overflow:hidden;">6</div>
<div class="t" style="left:113px;top:378px;width:50px;text-align:right;overflow:hidden;">92,805</div>
<div class="t" style="left:166px;top:378px;width:69px;text-align:left;overflow:hidden;">-1234.218...</div>
<div class="t" style="left:236px;top:378px;width:76px;text-align:left;overflow:hidden;">-0.0470562...</div>
<div class="t" style="left:313px;top:378px;width:73px;text-align:left;overflow:hidden;">0.0, 1.0, -0.0</div>
<div class="t" style="left:387px;top:378px;width:85px;text-align:left;overflow:hidden;">0.9988922, 0...</div>
<div class="t" style="left:473px;top:378px;width:85px;text-align:left;overflow:hidden;">-0.9990537, ...</div>
<div style="left:78px;top:393px;width:480px;height:1px;background:#999999;"></div>
<div class="t" style="left:79px;top:394px;width:31px;text-align:right;overflow:hidden;">7</div>
<div class="t" style="left:113px;top:394px;width:50px;text-align:right;overflow:hidden;">102,567</div>
<div class="t" style="left:166px;top:394px;width:69px;text-align:left;overflow:hidden;">-1243.971...</div>
<div class="t" style="left:236px;top:394px;width:76px;text-align:left;overflow:hidden;">-0.0415036...</div>
<div class="t" style="left:313px;top:394px;width:73px;text-align:left;overflow:hidden;">0.0, 1.0, -0.0</div>
<div class="t" style="left:387px;top:394px;width:85px;text-align:left;overflow:hidden;">0.9991383, 0...</div>
<div class="t" style="left:473px;top:394px;width:85px;text-align:left;overflow:hidden;">-0.99924564,...</div>
<div style="left:78px;top:409px;width:480px;height:1px;background:#999999;"></div>
<div class="t" style="left:79px;top:410px;width:31px;text-align:right;overflow:hidden;">8</div>
<div class="t" style="left:113px;top:410px;width:50px;text-align:right;overflow:hidden;">112,53</div>
<div class="t" style="left:166px;top:410px;width:69px;text-align:left;overflow:hidden;">-1253.928...</div>
<div class="t" style="left:236px;top:410px;width:76px;text-align:left;overflow:hidden;">-0.0361963...</div>
<div class="t" style="left:313px;top:410px;width:73px;text-align:left;overflow:hidden;">-0.030223...</div>
<div class="t" style="left:387px;top:410px;width:85px;text-align:left;overflow:hidden;">0.999344, 0....</div>
<div class="t" style="left:473px;top:410px;width:85px;text-align:left;overflow:hidden;">-0.9712947, -...</div>
<div style="left:78px;top:425px;width:480px;height:1px;background:#999999;"></div>
<div class="t" style="left:79px;top:426px;width:31px;text-align:right;overflow:hidden;">9</div>
<div class="t" style="left:113px;top:426px;width:50px;text-align:right;overflow:hidden;">121,479</div>
<div class="t" style="left:166px;top:426px;width:69px;text-align:left;overflow:hidden;">-1261.915...</div>
<div class="t" style="left:236px;top:426px;width:76px;text-align:left;overflow:hidden;">-0.4504068...</div>
<div class="t" style="left:313px;top:426px;width:73px;text-align:left;overflow:hidden;">-0.037767...</div>
<div class="t" style="left:387px;top:426px;width:85px;text-align:left;overflow:hidden;">0.8925798, 0...</div>
<div class="t" style="left:473px;top:426px;width:85px;text-align:left;overflow:hidden;">-0.7938283, -...</div>
<div style="left:78px;top:441px;width:480px;height:1px;background:#999999;"></div>
<div style="left:78px;top:282px;width:1px;height:163px;background:#999999;"></div>
<div style="left:111px;top:282px;width:1px;height:163px;background:#999999;"></div>
<div style="left:164px;top:282px;width:1px;height:163px;background:#999999;"></div>
<div style="left:234px;top:282px;width:1px;height:163px;background:#999999;"></div>
<div style="left:311px;top:282px;width:1px;height:163px;background:#999999;"></div>
<div style="left:385px;top:282px;width:1px;height:163px;background:#999999;"></div>
<div style="left:471px;top:282px;width:1px;height:163px;background:#999999;"></div>
<div style="left:557px;top:282px;width:1px;height:163px;background:#999999;"></div>
<div style="left:557px;top:266px;width:16px;height:16px;background:#cccccc;"></div>
<div style="left:557px;top:281px;width:15px;height:1px;background:#666666;"></div>
<div style="left:557px;top:282px;width:16px;height:163px;background:#cccccc;"></div>
<div style="left:557px;top:282px;width:1px;height:163px;background:#666666;"></div>
<div style="left:572px;top:282px;width:1px;height:163px;background:#666666;"></div>
<div style="left:558px;top:282px;width:1px;height:15px;background:#ffffff;"></div>
<div style="left:558px;top:282px;width:14px;height:1px;background:#ffffff;"></div>
<div style="left:558px;top:297px;width:14px;height:1px;background:#666666;"></div>
<div style="left:565px;top:287px;width:1px;height:1px;background:#000;"></div>
<div style="left:564px;top:288px;width:3px;height:1px;background:#000;"></div>
<div style="left:563px;top:289px;width:5px;height:1px;background:#000;"></div>
<div style="left:562px;top:290px;width:7px;height:1px;background:#000;"></div>
<div style="left:558px;top:429px;width:14px;height:1px;background:#666666;"></div>
<div style="left:559px;top:430px;width:13px;height:1px;background:#ffffff;"></div>
<div style="left:558px;top:430px;width:1px;height:15px;background:#ffffff;"></div>
<div style="left:565px;top:439px;width:1px;height:1px;background:#000;"></div>
<div style="left:564px;top:438px;width:3px;height:1px;background:#000;"></div>
<div style="left:563px;top:437px;width:5px;height:1px;background:#000;"></div>
<div style="left:562px;top:436px;width:7px;height:1px;background:#000;"></div>
<div style="left:557px;top:299px;width:16px;height:82px;background:#9999cc;"></div>
<div style="left:557px;top:299px;width:16px;height:1px;background:#666699;"></div>
<div style="left:557px;top:380px;width:16px;height:1px;background:#666699;"></div>
<div style="left:557px;top:299px;width:1px;height:82px;background:#666699;"></div>
<div style="left:572px;top:299px;width:1px;height:82px;background:#666699;"></div>
<div style="left:558px;top:300px;width:14px;height:1px;background:#ccccff;"></div>
<div style="left:558px;top:300px;width:1px;height:80px;background:#ccccff;"></div>
<svg style="position:absolute;left:560px;top:303px;width:10px;height:75px;" width="10" height="75"><defs><pattern id="p2" width="4" height="4" patternUnits="userSpaceOnUse"><rect x="0" y="0" width="1" height="1" fill="#ccccff"/><rect x="2" y="2" width="1" height="1" fill="#ccccff"/><rect x="1" y="1" width="1" height="1" fill="#666699"/><rect x="3" y="3" width="1" height="1" fill="#666699"/></pattern></defs><rect width="10" height="75" fill="url(#p2)"/></svg>
<div style="left:76px;top:470px;width:498px;height:1px;background:#ffffff;"></div>
<div style="left:76px;top:470px;width:1px;height:265px;background:#ffffff;"></div>
<div style="left:573px;top:470px;width:1px;height:265px;background:#666666;"></div>
<div style="left:76px;top:734px;width:498px;height:1px;background:#666666;"></div>
<div style="left:79px;top:452px;width:49px;height:19px;background:#cccccc;"></div>
<svg style="position:absolute;left:78px;top:451px" width="51" height="20"><path d="M0.5 19V6.5L6.5 0.5H50.5V19" fill="#cccccc" stroke="#666666" stroke-width="1"/><path d="M1.5 19V6.9L6.9 1.5H49.5" fill="none" stroke="#fff" stroke-width="1"/><rect x="0" y="0" width="1" height="1" fill="#cccccc"/></svg>
<div class="t" style="left:89px;top:453px;font-weight:bold;">Right</div>
<svg style="position:absolute;left:128px;top:451px" width="43" height="20"><path d="M0.5 19V6.5L6.5 0.5H42.5V19z" fill="#999999" stroke="none"/><path d="M0.5 6.5L6.5 0.5H42.5V19" fill="none" stroke="#666666" stroke-width="1"/><path d="M1.5 6.9L6.9 1.5H41.5" fill="none" stroke="#fff" stroke-width="1"/></svg>
<div class="t" style="left:138px;top:453px;font-weight:bold;">Left</div>
<div style="left:128px;top:470px;width:43px;height:1px;background:#ffffff;"></div>
<div style="left:79px;top:470px;width:48px;height:1px;background:#cccccc;"></div>
<div class="t" style="left:79px;top:473px;font-weight:bold;">Lanes</div>
<div style="left:79px;top:488px;width:319px;height:1px;background:#666666;"></div>
<div style="left:79px;top:488px;width:1px;height:64px;background:#666666;"></div>
<div style="left:397px;top:488px;width:1px;height:64px;background:#666666;"></div>
<div style="left:79px;top:551px;width:319px;height:1px;background:#666666;"></div>
<div style="left:398px;top:489px;width:1px;height:64px;background:#ffffff;"></div>
<div style="left:80px;top:552px;width:319px;height:1px;background:#ffffff;"></div>
<div style="left:80px;top:489px;width:75px;height:16px;background:#cccccc;"></div>
<div style="left:80px;top:489px;width:74px;height:1px;background:#ffffff;"></div>
<div style="left:80px;top:489px;width:1px;height:15px;background:#ffffff;"></div>
<div style="left:154px;top:489px;width:1px;height:16px;background:#666666;"></div>
<div style="left:81px;top:504px;width:74px;height:1px;background:#666666;"></div>
<div class="t" style="left:81px;top:490px;width:73px;text-align:center;overflow:hidden;">Index</div>
<div style="left:155px;top:489px;width:75px;height:16px;background:#cccccc;"></div>
<div style="left:155px;top:489px;width:74px;height:1px;background:#ffffff;"></div>
<div style="left:155px;top:489px;width:1px;height:15px;background:#ffffff;"></div>
<div style="left:229px;top:489px;width:1px;height:16px;background:#666666;"></div>
<div style="left:156px;top:504px;width:74px;height:1px;background:#666666;"></div>
<div class="t" style="left:156px;top:490px;width:73px;text-align:center;overflow:hidden;">Distance</div>
<div style="left:230px;top:489px;width:76px;height:16px;background:#cccccc;"></div>
<div style="left:230px;top:489px;width:75px;height:1px;background:#ffffff;"></div>
<div style="left:230px;top:489px;width:1px;height:15px;background:#ffffff;"></div>
<div style="left:305px;top:489px;width:1px;height:16px;background:#666666;"></div>
<div style="left:231px;top:504px;width:75px;height:1px;background:#666666;"></div>
<div class="t" style="left:231px;top:490px;width:74px;text-align:center;overflow:hidden;">Distance 0</div>
<div style="left:306px;top:489px;width:75px;height:16px;background:#cccccc;"></div>
<div style="left:306px;top:489px;width:74px;height:1px;background:#ffffff;"></div>
<div style="left:306px;top:489px;width:1px;height:15px;background:#ffffff;"></div>
<div style="left:380px;top:489px;width:1px;height:16px;background:#666666;"></div>
<div style="left:307px;top:504px;width:74px;height:1px;background:#666666;"></div>
<div class="t" style="left:307px;top:490px;width:73px;text-align:center;overflow:hidden;">Vertices 0</div>
<div style="left:80px;top:505px;width:301px;height:46px;background:#ffffff;"></div>
<div style="left:81px;top:505px;width:301px;height:1px;background:#c0c0c0;"></div>
<div class="t" style="left:82px;top:505px;width:72px;text-align:right;overflow:hidden;">0</div>
<div class="t" style="left:157px;top:505px;width:72px;text-align:right;overflow:hidden;">0</div>
<div class="t" style="left:232px;top:505px;width:73px;text-align:right;overflow:hidden;">0</div>
<div class="t" style="left:308px;top:505px;width:74px;text-align:left;overflow:hidden;">-1269.095, ...</div>
<div style="left:81px;top:520px;width:301px;height:1px;background:#999999;"></div>
<div class="t" style="left:82px;top:521px;width:72px;text-align:right;overflow:hidden;">1</div>
<div class="t" style="left:157px;top:521px;width:72px;text-align:right;overflow:hidden;">15</div>
<div class="t" style="left:232px;top:521px;width:73px;text-align:right;overflow:hidden;">11,103</div>
<div class="t" style="left:308px;top:521px;width:74px;text-align:left;overflow:hidden;">-1269.4979...</div>
<div style="left:81px;top:536px;width:301px;height:1px;background:#999999;"></div>
<div class="t" style="left:82px;top:537px;width:72px;text-align:right;overflow:hidden;">2</div>
<div class="t" style="left:157px;top:537px;width:72px;text-align:right;overflow:hidden;">63,58</div>
<div class="t" style="left:232px;top:537px;width:73px;text-align:right;overflow:hidden;">28,342</div>
<div class="t" style="left:308px;top:537px;width:74px;text-align:left;overflow:hidden;">-1270.1235...</div>
<div style="left:81px;top:505px;width:1px;height:46px;background:#999999;"></div>
<div style="left:155px;top:505px;width:1px;height:46px;background:#999999;"></div>
<div style="left:230px;top:505px;width:1px;height:46px;background:#999999;"></div>
<div style="left:306px;top:505px;width:1px;height:46px;background:#999999;"></div>
<div style="left:381px;top:505px;width:1px;height:46px;background:#999999;"></div>
<div style="left:381px;top:489px;width:16px;height:16px;background:#cccccc;"></div>
<div style="left:382px;top:505px;width:16px;height:46px;background:#cccccc;"></div>
<div style="left:382px;top:505px;width:1px;height:46px;background:#666666;"></div>
<div style="left:397px;top:505px;width:1px;height:46px;background:#666666;"></div>
<div style="left:383px;top:505px;width:1px;height:15px;background:#ffffff;"></div>
<div style="left:383px;top:505px;width:14px;height:1px;background:#ffffff;"></div>
<div style="left:383px;top:520px;width:14px;height:1px;background:#666666;"></div>
<div style="left:390px;top:510px;width:1px;height:1px;background:#000;"></div>
<div style="left:389px;top:511px;width:3px;height:1px;background:#000;"></div>
<div style="left:388px;top:512px;width:5px;height:1px;background:#000;"></div>
<div style="left:387px;top:513px;width:7px;height:1px;background:#000;"></div>
<div style="left:383px;top:535px;width:14px;height:1px;background:#666666;"></div>
<div style="left:384px;top:536px;width:13px;height:1px;background:#ffffff;"></div>
<div style="left:383px;top:536px;width:1px;height:15px;background:#ffffff;"></div>
<div style="left:390px;top:545px;width:1px;height:1px;background:#000;"></div>
<div style="left:389px;top:544px;width:3px;height:1px;background:#000;"></div>
<div style="left:388px;top:543px;width:5px;height:1px;background:#000;"></div>
<div style="left:387px;top:542px;width:7px;height:1px;background:#000;"></div>
<div style="left:382px;top:521px;width:16px;height:16px;background:#9999cc;"></div>
<div style="left:382px;top:521px;width:16px;height:1px;background:#666699;"></div>
<div style="left:382px;top:536px;width:16px;height:1px;background:#666699;"></div>
<div style="left:382px;top:521px;width:1px;height:16px;background:#666699;"></div>
<div style="left:397px;top:521px;width:1px;height:16px;background:#666699;"></div>
<div style="left:383px;top:522px;width:14px;height:1px;background:#ccccff;"></div>
<div style="left:383px;top:522px;width:1px;height:14px;background:#ccccff;"></div>
<svg style="position:absolute;left:385px;top:525px;width:10px;height:9px;" width="10" height="9"><defs><pattern id="p3" width="4" height="4" patternUnits="userSpaceOnUse"><rect x="0" y="0" width="1" height="1" fill="#ccccff"/><rect x="2" y="2" width="1" height="1" fill="#ccccff"/><rect x="1" y="1" width="1" height="1" fill="#666699"/><rect x="3" y="3" width="1" height="1" fill="#666699"/></pattern></defs><rect width="10" height="9" fill="url(#p3)"/></svg>
<div class="t" style="left:399px;top:473px;font-weight:bold;">Unknown</div>
<div style="left:400px;top:488px;width:170px;height:1px;background:#666666;"></div>
<div style="left:400px;top:488px;width:1px;height:64px;background:#666666;"></div>
<div style="left:569px;top:488px;width:1px;height:64px;background:#666666;"></div>
<div style="left:400px;top:551px;width:170px;height:1px;background:#666666;"></div>
<div style="left:570px;top:489px;width:1px;height:64px;background:#ffffff;"></div>
<div style="left:401px;top:552px;width:170px;height:1px;background:#ffffff;"></div>
<div style="left:401px;top:489px;width:75px;height:16px;background:#cccccc;"></div>
<div style="left:401px;top:489px;width:74px;height:1px;background:#ffffff;"></div>
<div style="left:401px;top:489px;width:1px;height:15px;background:#ffffff;"></div>
<div style="left:475px;top:489px;width:1px;height:16px;background:#666666;"></div>
<div style="left:402px;top:504px;width:74px;height:1px;background:#666666;"></div>
<div class="t" style="left:402px;top:490px;width:73px;text-align:center;overflow:hidden;">Index</div>
<div style="left:476px;top:489px;width:76px;height:16px;background:#cccccc;"></div>
<div style="left:476px;top:489px;width:75px;height:1px;background:#ffffff;"></div>
<div style="left:476px;top:489px;width:1px;height:15px;background:#ffffff;"></div>
<div style="left:551px;top:489px;width:1px;height:16px;background:#666666;"></div>
<div style="left:477px;top:504px;width:75px;height:1px;background:#666666;"></div>
<div class="t" style="left:477px;top:490px;width:74px;text-align:center;overflow:hidden;">Unknown</div>
<div style="left:401px;top:505px;width:151px;height:46px;background:#ffffff;"></div>
<div style="left:402px;top:505px;width:151px;height:1px;background:#c0c0c0;"></div>
<div class="t" style="left:403px;top:505px;width:72px;text-align:right;overflow:hidden;">0</div>
<div class="t" style="left:478px;top:505px;width:73px;text-align:right;overflow:hidden;">55,081</div>
<div style="left:402px;top:520px;width:151px;height:1px;background:#999999;"></div>
<div class="t" style="left:403px;top:521px;width:72px;text-align:right;overflow:hidden;">1</div>
<div class="t" style="left:478px;top:521px;width:73px;text-align:right;overflow:hidden;">2,5</div>
<div style="left:402px;top:536px;width:151px;height:1px;background:#999999;"></div>
<div class="t" style="left:403px;top:537px;width:72px;text-align:right;overflow:hidden;">2</div>
<div class="t" style="left:478px;top:537px;width:73px;text-align:right;overflow:hidden;">-2,5</div>
<div style="left:402px;top:505px;width:1px;height:46px;background:#999999;"></div>
<div style="left:476px;top:505px;width:1px;height:46px;background:#999999;"></div>
<div style="left:552px;top:505px;width:1px;height:46px;background:#999999;"></div>
<div style="left:552px;top:489px;width:17px;height:16px;background:#cccccc;"></div>
<div style="left:553px;top:505px;width:16px;height:46px;background:#cccccc;"></div>
<div style="left:553px;top:505px;width:1px;height:46px;background:#666666;"></div>
<div style="left:568px;top:505px;width:1px;height:46px;background:#666666;"></div>
<div style="left:554px;top:505px;width:1px;height:15px;background:#ffffff;"></div>
<div style="left:554px;top:505px;width:14px;height:1px;background:#ffffff;"></div>
<div style="left:554px;top:520px;width:14px;height:1px;background:#666666;"></div>
<div style="left:561px;top:510px;width:1px;height:1px;background:#000;"></div>
<div style="left:560px;top:511px;width:3px;height:1px;background:#000;"></div>
<div style="left:559px;top:512px;width:5px;height:1px;background:#000;"></div>
<div style="left:558px;top:513px;width:7px;height:1px;background:#000;"></div>
<div style="left:554px;top:535px;width:14px;height:1px;background:#666666;"></div>
<div style="left:555px;top:536px;width:13px;height:1px;background:#ffffff;"></div>
<div style="left:554px;top:536px;width:1px;height:15px;background:#ffffff;"></div>
<div style="left:561px;top:545px;width:1px;height:1px;background:#000;"></div>
<div style="left:560px;top:544px;width:3px;height:1px;background:#000;"></div>
<div style="left:559px;top:543px;width:5px;height:1px;background:#000;"></div>
<div style="left:558px;top:542px;width:7px;height:1px;background:#000;"></div>
<div style="left:553px;top:521px;width:16px;height:16px;background:#9999cc;"></div>
<div style="left:553px;top:521px;width:16px;height:1px;background:#666699;"></div>
<div style="left:553px;top:536px;width:16px;height:1px;background:#666699;"></div>
<div style="left:553px;top:521px;width:1px;height:16px;background:#666699;"></div>
<div style="left:568px;top:521px;width:1px;height:16px;background:#666699;"></div>
<div style="left:554px;top:522px;width:14px;height:1px;background:#ccccff;"></div>
<div style="left:554px;top:522px;width:1px;height:14px;background:#ccccff;"></div>
<svg style="position:absolute;left:556px;top:525px;width:10px;height:9px;" width="10" height="9"><defs><pattern id="p4" width="4" height="4" patternUnits="userSpaceOnUse"><rect x="0" y="0" width="1" height="1" fill="#ccccff"/><rect x="2" y="2" width="1" height="1" fill="#ccccff"/><rect x="1" y="1" width="1" height="1" fill="#666699"/><rect x="3" y="3" width="1" height="1" fill="#666699"/></pattern></defs><rect width="10" height="9" fill="url(#p4)"/></svg>
<div class="t" style="left:79px;top:554px;font-weight:bold;">Sidewalks</div>
<div style="left:79px;top:569px;width:137px;height:1px;background:#666666;"></div>
<div style="left:79px;top:569px;width:1px;height:64px;background:#666666;"></div>
<div style="left:215px;top:569px;width:1px;height:64px;background:#666666;"></div>
<div style="left:79px;top:632px;width:137px;height:1px;background:#666666;"></div>
<div style="left:216px;top:570px;width:1px;height:64px;background:#ffffff;"></div>
<div style="left:80px;top:633px;width:137px;height:1px;background:#ffffff;"></div>
<div style="left:80px;top:570px;width:29px;height:16px;background:#cccccc;"></div>
<div style="left:80px;top:570px;width:28px;height:1px;background:#ffffff;"></div>
<div style="left:80px;top:570px;width:1px;height:15px;background:#ffffff;"></div>
<div style="left:108px;top:570px;width:1px;height:16px;background:#666666;"></div>
<div style="left:81px;top:585px;width:28px;height:1px;background:#666666;"></div>
<div class="t" style="left:82px;top:571px;width:26px;text-align:left;overflow:hidden;">Index</div>
<div style="left:109px;top:570px;width:30px;height:16px;background:#cccccc;"></div>
<div style="left:109px;top:570px;width:29px;height:1px;background:#ffffff;"></div>
<div style="left:109px;top:570px;width:1px;height:15px;background:#ffffff;"></div>
<div style="left:138px;top:570px;width:1px;height:16px;background:#666666;"></div>
<div style="left:110px;top:585px;width:29px;height:1px;background:#666666;"></div>
<div class="t" style="left:111px;top:571px;width:27px;text-align:left;overflow:hidden;">Inner</div>
<div style="left:139px;top:570px;width:30px;height:16px;background:#cccccc;"></div>
<div style="left:139px;top:570px;width:29px;height:1px;background:#ffffff;"></div>
<div style="left:139px;top:570px;width:1px;height:15px;background:#ffffff;"></div>
<div style="left:168px;top:570px;width:1px;height:16px;background:#666666;"></div>
<div style="left:140px;top:585px;width:29px;height:1px;background:#666666;"></div>
<div class="t" style="left:141px;top:571px;width:27px;text-align:left;overflow:hidden;">Ce...</div>
<div style="left:169px;top:570px;width:30px;height:16px;background:#cccccc;"></div>
<div style="left:169px;top:570px;width:29px;height:1px;background:#ffffff;"></div>
<div style="left:169px;top:570px;width:1px;height:15px;background:#ffffff;"></div>
<div style="left:198px;top:570px;width:1px;height:16px;background:#666666;"></div>
<div style="left:170px;top:585px;width:29px;height:1px;background:#666666;"></div>
<div class="t" style="left:171px;top:571px;width:27px;text-align:left;overflow:hidden;">Out...</div>
<div style="left:80px;top:586px;width:119px;height:46px;background:#ffffff;"></div>
<div style="left:81px;top:586px;width:119px;height:1px;background:#c0c0c0;"></div>
<div class="t" style="left:82px;top:586px;width:26px;text-align:right;overflow:hidden;">0</div>
<div class="t" style="left:111px;top:586px;width:29px;text-align:left;overflow:hidden;">-12...</div>
<div class="t" style="left:141px;top:586px;width:29px;text-align:left;overflow:hidden;">-12...</div>
<div class="t" style="left:171px;top:586px;width:29px;text-align:left;overflow:hidden;">-12...</div>
<div style="left:81px;top:601px;width:119px;height:1px;background:#999999;"></div>
<div class="t" style="left:82px;top:602px;width:26px;text-align:right;overflow:hidden;">1</div>
<div class="t" style="left:111px;top:602px;width:29px;text-align:left;overflow:hidden;">-12...</div>
<div class="t" style="left:141px;top:602px;width:29px;text-align:left;overflow:hidden;">-12...</div>
<div class="t" style="left:171px;top:602px;width:29px;text-align:left;overflow:hidden;">-12...</div>
<div style="left:81px;top:617px;width:119px;height:1px;background:#999999;"></div>
<div class="t" style="left:82px;top:618px;width:26px;text-align:right;overflow:hidden;">2</div>
<div class="t" style="left:111px;top:618px;width:29px;text-align:left;overflow:hidden;">-12...</div>
<div class="t" style="left:141px;top:618px;width:29px;text-align:left;overflow:hidden;">-12...</div>
<div class="t" style="left:171px;top:618px;width:29px;text-align:left;overflow:hidden;">-12...</div>
<div style="left:81px;top:586px;width:1px;height:46px;background:#999999;"></div>
<div style="left:109px;top:586px;width:1px;height:46px;background:#999999;"></div>
<div style="left:139px;top:586px;width:1px;height:46px;background:#999999;"></div>
<div style="left:169px;top:586px;width:1px;height:46px;background:#999999;"></div>
<div style="left:199px;top:586px;width:1px;height:46px;background:#999999;"></div>
<div style="left:199px;top:570px;width:16px;height:16px;background:#cccccc;"></div>
<div style="left:200px;top:586px;width:16px;height:46px;background:#cccccc;"></div>
<div style="left:200px;top:586px;width:1px;height:46px;background:#666666;"></div>
<div style="left:215px;top:586px;width:1px;height:46px;background:#666666;"></div>
<div style="left:201px;top:586px;width:1px;height:15px;background:#ffffff;"></div>
<div style="left:201px;top:586px;width:14px;height:1px;background:#ffffff;"></div>
<div style="left:201px;top:601px;width:14px;height:1px;background:#666666;"></div>
<div style="left:208px;top:591px;width:1px;height:1px;background:#000;"></div>
<div style="left:207px;top:592px;width:3px;height:1px;background:#000;"></div>
<div style="left:206px;top:593px;width:5px;height:1px;background:#000;"></div>
<div style="left:205px;top:594px;width:7px;height:1px;background:#000;"></div>
<div style="left:201px;top:616px;width:14px;height:1px;background:#666666;"></div>
<div style="left:202px;top:617px;width:13px;height:1px;background:#ffffff;"></div>
<div style="left:201px;top:617px;width:1px;height:15px;background:#ffffff;"></div>
<div style="left:208px;top:626px;width:1px;height:1px;background:#000;"></div>
<div style="left:207px;top:625px;width:3px;height:1px;background:#000;"></div>
<div style="left:206px;top:624px;width:5px;height:1px;background:#000;"></div>
<div style="left:205px;top:623px;width:7px;height:1px;background:#000;"></div>
<div style="left:200px;top:601px;width:16px;height:16px;background:#9999cc;"></div>
<div style="left:200px;top:601px;width:16px;height:1px;background:#666699;"></div>
<div style="left:200px;top:616px;width:16px;height:1px;background:#666699;"></div>
<div style="left:200px;top:601px;width:1px;height:16px;background:#666699;"></div>
<div style="left:215px;top:601px;width:1px;height:16px;background:#666699;"></div>
<div style="left:201px;top:602px;width:14px;height:1px;background:#ccccff;"></div>
<div style="left:201px;top:602px;width:1px;height:14px;background:#ccccff;"></div>
<svg style="position:absolute;left:203px;top:605px;width:10px;height:9px;" width="10" height="9"><defs><pattern id="p5" width="4" height="4" patternUnits="userSpaceOnUse"><rect x="0" y="0" width="1" height="1" fill="#ccccff"/><rect x="2" y="2" width="1" height="1" fill="#ccccff"/><rect x="1" y="1" width="1" height="1" fill="#666699"/><rect x="3" y="3" width="1" height="1" fill="#666699"/></pattern></defs><rect width="10" height="9" fill="url(#p5)"/></svg>
<div class="t" style="left:217px;top:554px;font-weight:bold;">Trams</div>
<div style="left:218px;top:569px;width:180px;height:1px;background:#666666;"></div>
<div style="left:218px;top:569px;width:1px;height:64px;background:#666666;"></div>
<div style="left:397px;top:569px;width:1px;height:64px;background:#666666;"></div>
<div style="left:218px;top:632px;width:180px;height:1px;background:#666666;"></div>
<div style="left:398px;top:570px;width:1px;height:64px;background:#ffffff;"></div>
<div style="left:219px;top:633px;width:180px;height:1px;background:#ffffff;"></div>
<div style="left:219px;top:570px;width:178px;height:16px;background:#cccccc;"></div>
<div style="left:219px;top:570px;width:177px;height:1px;background:#ffffff;"></div>
<div style="left:219px;top:570px;width:1px;height:15px;background:#ffffff;"></div>
<div style="left:396px;top:570px;width:1px;height:16px;background:#666666;"></div>
<div style="left:220px;top:585px;width:177px;height:1px;background:#666666;"></div>
<div class="t" style="left:220px;top:571px;width:176px;text-align:center;overflow:hidden;">Index</div>
<div style="left:219px;top:586px;width:178px;height:46px;background:#ffffff;"></div>
<div style="left:220px;top:586px;width:178px;height:1px;background:#c0c0c0;"></div>
<div class="t" style="left:399px;top:554px;font-weight:bold;">Trains</div>
<div style="left:400px;top:569px;width:169px;height:1px;background:#666666;"></div>
<div style="left:400px;top:569px;width:1px;height:64px;background:#666666;"></div>
<div style="left:568px;top:569px;width:1px;height:64px;background:#666666;"></div>
<div style="left:400px;top:632px;width:169px;height:1px;background:#666666;"></div>
<div style="left:569px;top:570px;width:1px;height:64px;background:#ffffff;"></div>
<div style="left:401px;top:633px;width:169px;height:1px;background:#ffffff;"></div>
<div style="left:401px;top:570px;width:167px;height:16px;background:#cccccc;"></div>
<div style="left:401px;top:570px;width:166px;height:1px;background:#ffffff;"></div>
<div style="left:401px;top:570px;width:1px;height:15px;background:#ffffff;"></div>
<div style="left:567px;top:570px;width:1px;height:16px;background:#666666;"></div>
<div style="left:402px;top:585px;width:166px;height:1px;background:#666666;"></div>
<div class="t" style="left:402px;top:571px;width:165px;text-align:center;overflow:hidden;">Index</div>
<div style="left:401px;top:586px;width:167px;height:46px;background:#ffffff;"></div>
<div style="left:402px;top:586px;width:167px;height:1px;background:#c0c0c0;"></div>
<div class="t" style="left:79px;top:635px;font-weight:bold;">Unknown3</div>
<div style="left:217px;top:634px;width:122px;height:20px;background:#ffffff;"></div>
<div style="left:217px;top:634px;width:121px;height:1px;background:#666666;"></div>
<div style="left:217px;top:634px;width:1px;height:19px;background:#666666;"></div>
<div style="left:218px;top:652px;width:120px;height:1px;background:#666666;"></div>
<div style="left:337px;top:635px;width:1px;height:18px;background:#666666;"></div>
<div style="left:218px;top:653px;width:121px;height:1px;background:#ffffff;"></div>
<div style="left:338px;top:635px;width:1px;height:19px;background:#ffffff;"></div>
<div style="left:217px;top:653px;width:1px;height:1px;background:#cccccc;"></div>
<div style="left:338px;top:634px;width:1px;height:1px;background:#cccccc;"></div>
<div class="t" style="left:220px;top:637px;">1</div>
<div class="t" style="left:339px;top:635px;font-weight:bold;">Unknown4</div>
<div style="left:400px;top:634px;width:170px;height:20px;background:#ffffff;"></div>
<div style="left:400px;top:634px;width:169px;height:1px;background:#666666;"></div>
<div style="left:400px;top:634px;width:1px;height:19px;background:#666666;"></div>
<div style="left:401px;top:652px;width:168px;height:1px;background:#666666;"></div>
<div style="left:568px;top:635px;width:1px;height:18px;background:#666666;"></div>
<div style="left:401px;top:653px;width:169px;height:1px;background:#ffffff;"></div>
<div style="left:569px;top:635px;width:1px;height:19px;background:#ffffff;"></div>
<div style="left:400px;top:653px;width:1px;height:1px;background:#cccccc;"></div>
<div style="left:569px;top:634px;width:1px;height:1px;background:#cccccc;"></div>
<div class="t" style="left:403px;top:637px;">3</div>
<div style="left:76px;top:758px;width:498px;height:1px;background:#ffffff;"></div>
<div style="left:76px;top:758px;width:1px;height:74px;background:#ffffff;"></div>
<div style="left:573px;top:758px;width:1px;height:74px;background:#666666;"></div>
<div style="left:76px;top:831px;width:498px;height:1px;background:#666666;"></div>
<div style="left:79px;top:740px;width:49px;height:19px;background:#cccccc;"></div>
<svg style="position:absolute;left:78px;top:739px" width="51" height="20"><path d="M0.5 19V6.5L6.5 0.5H50.5V19" fill="#cccccc" stroke="#666666" stroke-width="1"/><path d="M1.5 19V6.9L6.9 1.5H49.5" fill="none" stroke="#fff" stroke-width="1"/><rect x="0" y="0" width="1" height="1" fill="#cccccc"/></svg>
<div class="t" style="left:89px;top:741px;font-weight:bold;">Start</div>
<svg style="position:absolute;left:128px;top:739px" width="42" height="20"><path d="M0.5 19V6.5L6.5 0.5H41.5V19z" fill="#999999" stroke="none"/><path d="M0.5 6.5L6.5 0.5H41.5V19" fill="none" stroke="#666666" stroke-width="1"/><path d="M1.5 6.9L6.9 1.5H40.5" fill="none" stroke="#fff" stroke-width="1"/></svg>
<div class="t" style="left:137px;top:741px;font-weight:bold;">End</div>
<div style="left:128px;top:758px;width:42px;height:1px;background:#ffffff;"></div>
<div style="left:79px;top:758px;width:48px;height:1px;background:#cccccc;"></div>
<div class="t" style="left:79px;top:763px;font-weight:bold;">ISection</div>
<div style="left:128px;top:762px;width:257px;height:20px;background:#ffffff;"></div>
<div style="left:128px;top:762px;width:256px;height:1px;background:#666666;"></div>
<div style="left:128px;top:762px;width:1px;height:19px;background:#666666;"></div>
<div style="left:129px;top:780px;width:255px;height:1px;background:#666666;"></div>
<div style="left:383px;top:763px;width:1px;height:18px;background:#666666;"></div>
<div style="left:129px;top:781px;width:256px;height:1px;background:#ffffff;"></div>
<div style="left:384px;top:763px;width:1px;height:19px;background:#ffffff;"></div>
<div style="left:128px;top:781px;width:1px;height:1px;background:#cccccc;"></div>
<div style="left:384px;top:762px;width:1px;height:1px;background:#cccccc;"></div>
<div class="t" style="left:131px;top:765px;">c9</div>
<div class="t" style="left:79px;top:786px;font-weight:bold;">Origin</div>
<div style="left:128px;top:785px;width:257px;height:20px;background:#ffffff;"></div>
<div style="left:128px;top:785px;width:256px;height:1px;background:#666666;"></div>
<div style="left:128px;top:785px;width:1px;height:19px;background:#666666;"></div>
<div style="left:129px;top:803px;width:255px;height:1px;background:#666666;"></div>
<div style="left:383px;top:786px;width:1px;height:18px;background:#666666;"></div>
<div style="left:129px;top:804px;width:256px;height:1px;background:#ffffff;"></div>
<div style="left:384px;top:786px;width:1px;height:19px;background:#ffffff;"></div>
<div style="left:128px;top:804px;width:1px;height:1px;background:#cccccc;"></div>
<div style="left:384px;top:785px;width:1px;height:1px;background:#cccccc;"></div>
<div class="t" style="left:131px;top:788px;">-1211.12, 3.9998, -700.2162</div>
<div class="t" style="left:79px;top:809px;font-weight:bold;">Axis</div>
<div style="left:128px;top:808px;width:257px;height:20px;background:#ffffff;"></div>
<div style="left:128px;top:808px;width:256px;height:1px;background:#666666;"></div>
<div style="left:128px;top:808px;width:1px;height:19px;background:#666666;"></div>
<div style="left:129px;top:826px;width:255px;height:1px;background:#666666;"></div>
<div style="left:383px;top:809px;width:1px;height:18px;background:#666666;"></div>
<div style="left:129px;top:827px;width:256px;height:1px;background:#ffffff;"></div>
<div style="left:384px;top:809px;width:1px;height:19px;background:#ffffff;"></div>
<div style="left:128px;top:827px;width:1px;height:1px;background:#cccccc;"></div>
<div style="left:384px;top:808px;width:1px;height:1px;background:#cccccc;"></div>
<div class="t" style="left:131px;top:811px;">-1212.12, 3.9998, -700.22577</div>
<div class="t" style="left:386px;top:763px;font-weight:bold;">Unknown0</div>
<div style="left:450px;top:762px;width:120px;height:20px;background:#ffffff;"></div>
<div style="left:450px;top:762px;width:119px;height:1px;background:#666666;"></div>
<div style="left:450px;top:762px;width:1px;height:19px;background:#666666;"></div>
<div style="left:451px;top:780px;width:118px;height:1px;background:#666666;"></div>
<div style="left:568px;top:763px;width:1px;height:18px;background:#666666;"></div>
<div style="left:451px;top:781px;width:119px;height:1px;background:#ffffff;"></div>
<div style="left:569px;top:763px;width:1px;height:19px;background:#ffffff;"></div>
<div style="left:450px;top:781px;width:1px;height:1px;background:#cccccc;"></div>
<div style="left:569px;top:762px;width:1px;height:1px;background:#cccccc;"></div>
<div class="t" style="left:453px;top:765px;">cdcd</div>
<div class="t" style="left:386px;top:786px;font-weight:bold;">Unknown1</div>
<div style="left:450px;top:785px;width:120px;height:20px;background:#ffffff;"></div>
<div style="left:450px;top:785px;width:119px;height:1px;background:#666666;"></div>
<div style="left:450px;top:785px;width:1px;height:19px;background:#666666;"></div>
<div style="left:451px;top:803px;width:118px;height:1px;background:#666666;"></div>
<div style="left:568px;top:786px;width:1px;height:18px;background:#666666;"></div>
<div style="left:451px;top:804px;width:119px;height:1px;background:#ffffff;"></div>
<div style="left:569px;top:786px;width:1px;height:19px;background:#ffffff;"></div>
<div style="left:450px;top:804px;width:1px;height:1px;background:#cccccc;"></div>
<div style="left:569px;top:785px;width:1px;height:1px;background:#cccccc;"></div>
<div class="t" style="left:453px;top:788px;">0</div>
<div class="t" style="left:386px;top:809px;font-weight:bold;">Unknown2</div>
<div style="left:450px;top:808px;width:120px;height:20px;background:#ffffff;"></div>
<div style="left:450px;top:808px;width:119px;height:1px;background:#666666;"></div>
<div style="left:450px;top:808px;width:1px;height:19px;background:#666666;"></div>
<div style="left:451px;top:826px;width:118px;height:1px;background:#666666;"></div>
<div style="left:568px;top:809px;width:1px;height:18px;background:#666666;"></div>
<div style="left:451px;top:827px;width:119px;height:1px;background:#ffffff;"></div>
<div style="left:569px;top:809px;width:1px;height:19px;background:#ffffff;"></div>
<div style="left:450px;top:827px;width:1px;height:1px;background:#cccccc;"></div>
<div style="left:569px;top:808px;width:1px;height:1px;background:#cccccc;"></div>
<div class="t" style="left:453px;top:811px;">1</div>
<div style="left:580px;top:46px;width:3px;height:786px;background:#666666;"></div>
<div style="left:580px;top:60px;width:1px;height:349px;background:#000;"></div>
<div style="left:581px;top:61px;width:1px;height:348px;background:#999999;"></div>
<div style="left:580px;top:438px;width:1px;height:380px;background:#000;"></div>
<div style="left:581px;top:439px;width:1px;height:380px;background:#999999;"></div>
<div style="left:582px;top:424px;width:1px;height:1px;background:#9999cc;"></div>
<div style="left:582px;top:46px;width:1px;height:1px;background:#9999cc;"></div>
<div style="left:583px;top:46px;width:1px;height:378px;background:#9999cc;"></div>
<div style="left:583px;top:424px;width:1px;height:408px;background:#666666;"></div>
<div style="left:584px;top:46px;width:564px;height:790px;background:#d4d0c8;"></div>
<div style="left:584px;top:46px;width:564px;height:1px;background:#d4d0c8;"></div>
<div style="left:585px;top:47px;width:562px;height:1px;background:#ffffff;"></div>
<div style="left:585px;top:47px;width:1px;height:790px;background:#ffffff;"></div>
<div style="left:1147px;top:46px;width:1px;height:790px;background:#404040;"></div>
<div style="left:1146px;top:47px;width:1px;height:790px;background:#808080;"></div>
<div style="left:584px;top:834px;width:564px;height:1px;background:#404040;"></div>
<div style="left:585px;top:833px;width:562px;height:1px;background:#808080;"></div>
<div style="left:588px;top:50px;width:556px;height:18px;background:linear-gradient(to right,#808080,#c0c0c0);"></div>
<svg style="position:absolute;left:590px;top:51px" width="16" height="16"><path d="M4 1h6l2 3v3l3 3-1 3 1 2H3l-1-2 1-2-1-3 1-2-1-2z" fill="#fff" stroke="#4a5ae0" stroke-width="1"/><path d="M5 3h2v2H5zM8 2h2v2H8zM6 6h2v2H6zM9 5h2v3H9zM4 8h2v2H4z" fill="#e8182a"/><path d="M7 4h1v1H7zM10 8h1v1h-1z" fill="#ff8090"/><path d="M4 11q2-2 4 0t4-1l1 2-1 2H5z" fill="#5a48b0"/><path d="M7 12h3" stroke="#fff" stroke-width="1"/></svg>
<div class="t" style="left:608px;top:51px;font-size:11px;font-weight:bold;color:#d4d0c8;letter-spacing:0.3px;">3D View</div>
<div style="left:1126px;top:52px;width:16px;height:14px;background:#d4d0c8;"></div>
<div style="left:1126px;top:52px;width:15px;height:1px;background:#ffffff;"></div>
<div style="left:1126px;top:52px;width:1px;height:13px;background:#ffffff;"></div>
<div style="left:1126px;top:65px;width:16px;height:1px;background:#404040;"></div>
<div style="left:1141px;top:52px;width:1px;height:14px;background:#404040;"></div>
<div style="left:1127px;top:64px;width:14px;height:1px;background:#808080;"></div>
<div style="left:1140px;top:53px;width:1px;height:12px;background:#808080;"></div>
<svg style="position:absolute;left:1130px;top:55px" width="8" height="7"><path d="M0.5 0.5L7.5 6.5M7.5 0.5L0.5 6.5" stroke="#000" stroke-width="1.6"/></svg>
<div style="left:588px;top:68px;width:42px;height:763px;background:#d4d0c8;"></div>
<div style="left:588px;top:68px;width:556px;height:1px;background:#e4e1da;"></div>
<div style="left:588px;top:302px;width:42px;height:33px;background:#cccccc;"></div>
<div style="left:588px;top:302px;width:41px;height:1px;background:#666666;"></div>
<div style="left:588px;top:302px;width:1px;height:32px;background:#666666;"></div>
<div style="left:588px;top:333px;width:41px;height:1px;background:#666666;"></div>
<div style="left:628px;top:302px;width:1px;height:32px;background:#666666;"></div>
<div style="left:589px;top:303px;width:40px;height:1px;background:#ffffff;"></div>
<div style="left:589px;top:303px;width:1px;height:31px;background:#ffffff;"></div>
<div style="left:589px;top:334px;width:41px;height:1px;background:#ffffff;"></div>
<div style="left:629px;top:303px;width:1px;height:32px;background:#ffffff;"></div>
<div style="left:593px;top:307px;width:32px;height:23px;background:#c0c0c0;"></div>
<svg style="position:absolute;left:593px;top:307px" width="32" height="23"><defs><pattern id="dith" width="2" height="2" patternUnits="userSpaceOnUse"><rect width="1" height="1" fill="#000"/><rect x="1" y="1" width="1" height="1" fill="#000"/></pattern></defs><path d="M13 8h18v12h-15z" fill="url(#dith)"/><rect x="10" y="4" width="11" height="9" fill="#000"/><rect x="11" y="5" width="8" height="1" fill="#fff"/><rect x="11" y="8" width="8" height="1" fill="#fff"/><rect x="11" y="5" width="1" height="4" fill="#fff"/><rect x="15" y="6" width="1" height="2" fill="#fff"/><rect x="20" y="1" width="7" height="14" fill="#000"/><rect x="22" y="2" width="1" height="12" fill="#fff"/><path d="M6 1.5q-5 9 0 19" fill="none" stroke="#000" stroke-width="1.3"/><path d="M4 1l4 0-1 4zM4 21l4 0-1-4z" fill="#000"/></svg>
<div style="left:588px;top:335px;width:42px;height:33px;background:#cccccc;"></div>
<div style="left:588px;top:335px;width:41px;height:1px;background:#666666;"></div>
<div style="left:588px;top:335px;width:1px;height:32px;background:#666666;"></div>
<div style="left:588px;top:366px;width:41px;height:1px;background:#666666;"></div>
<div style="left:628px;top:335px;width:1px;height:32px;background:#666666;"></div>
<div style="left:589px;top:336px;width:40px;height:1px;background:#ffffff;"></div>
<div style="left:589px;top:336px;width:1px;height:31px;background:#ffffff;"></div>
<div style="left:589px;top:367px;width:41px;height:1px;background:#ffffff;"></div>
<div style="left:629px;top:336px;width:1px;height:32px;background:#ffffff;"></div>
<div style="left:593px;top:340px;width:32px;height:23px;background:#c0c0c0;"></div>
<svg style="position:absolute;left:593px;top:340px" width="32" height="23"><defs><pattern id="dith" width="2" height="2" patternUnits="userSpaceOnUse"><rect width="1" height="1" fill="#000"/><rect x="1" y="1" width="1" height="1" fill="#000"/></pattern></defs><path d="M13 8h18v12h-15z" fill="url(#dith)"/><rect x="10" y="4" width="11" height="9" fill="#000"/><rect x="11" y="5" width="8" height="1" fill="#fff"/><rect x="11" y="8" width="8" height="1" fill="#fff"/><rect x="11" y="5" width="1" height="4" fill="#fff"/><rect x="15" y="6" width="1" height="2" fill="#fff"/><rect x="20" y="1" width="7" height="14" fill="#000"/><rect x="22" y="2" width="1" height="12" fill="#fff"/><path d="M3 4q-3 7 0 14M3 4l6 3M3 18l6-3" fill="none" stroke="#000" stroke-width="1"/><path d="M2 5l3-1-1 3zM2 17l3 1-1-3z" fill="#000"/></svg>
<div style="left:588px;top:368px;width:42px;height:33px;background:#cccccc;"></div>
<div style="left:588px;top:368px;width:41px;height:1px;background:#666666;"></div>
<div style="left:588px;top:368px;width:1px;height:32px;background:#666666;"></div>
<div style="left:588px;top:399px;width:41px;height:1px;background:#666666;"></div>
<div style="left:628px;top:368px;width:1px;height:32px;background:#666666;"></div>
<div style="left:589px;top:369px;width:40px;height:1px;background:#ffffff;"></div>
<div style="left:589px;top:369px;width:1px;height:31px;background:#ffffff;"></div>
<div style="left:589px;top:400px;width:41px;height:1px;background:#ffffff;"></div>
<div style="left:629px;top:369px;width:1px;height:32px;background:#ffffff;"></div>
<div style="left:593px;top:373px;width:32px;height:23px;background:#c0c0c0;"></div>
<svg style="position:absolute;left:593px;top:373px" width="32" height="23"><defs><pattern id="dith" width="2" height="2" patternUnits="userSpaceOnUse"><rect width="1" height="1" fill="#000"/><rect x="1" y="1" width="1" height="1" fill="#000"/></pattern></defs><path d="M13 8h18v12h-15z" fill="url(#dith)"/><rect x="10" y="4" width="11" height="9" fill="#000"/><rect x="11" y="5" width="8" height="1" fill="#fff"/><rect x="11" y="8" width="8" height="1" fill="#fff"/><rect x="11" y="5" width="1" height="4" fill="#fff"/><rect x="15" y="6" width="1" height="2" fill="#fff"/><rect x="20" y="1" width="7" height="14" fill="#000"/><rect x="22" y="2" width="1" height="12" fill="#fff"/><path d="M4 2v18" stroke="#000" stroke-width="1.3"/><path d="M1.5 5l2.5-4 2.5 4zM1.5 17l2.5 4 2.5-4z" fill="#000"/></svg>
<div style="left:588px;top:401px;width:42px;height:33px;background:#cccccc;"></div>
<div style="left:588px;top:401px;width:41px;height:1px;background:#666666;"></div>
<div style="left:588px;top:401px;width:1px;height:32px;background:#666666;"></div>
<div style="left:588px;top:432px;width:41px;height:1px;background:#666666;"></div>
<div style="left:628px;top:401px;width:1px;height:32px;background:#666666;"></div>
<div style="left:589px;top:402px;width:40px;height:1px;background:#ffffff;"></div>
<div style="left:589px;top:402px;width:1px;height:31px;background:#ffffff;"></div>
<div style="left:589px;top:433px;width:41px;height:1px;background:#ffffff;"></div>
<div style="left:629px;top:402px;width:1px;height:32px;background:#ffffff;"></div>
<div style="left:593px;top:406px;width:32px;height:23px;background:#c0c0c0;"></div>
<svg style="position:absolute;left:593px;top:406px" width="32" height="23"><defs><pattern id="dith" width="2" height="2" patternUnits="userSpaceOnUse"><rect width="1" height="1" fill="#000"/><rect x="1" y="1" width="1" height="1" fill="#000"/></pattern></defs><path d="M13 8h18v12h-15z" fill="url(#dith)"/><rect x="10" y="4" width="11" height="9" fill="#000"/><rect x="11" y="5" width="8" height="1" fill="#fff"/><rect x="11" y="8" width="8" height="1" fill="#fff"/><rect x="11" y="5" width="1" height="4" fill="#fff"/><rect x="15" y="6" width="1" height="2" fill="#fff"/><rect x="20" y="1" width="7" height="14" fill="#000"/><rect x="22" y="2" width="1" height="12" fill="#fff"/><path d="M1 18h11v4H1z" fill="url(#dith)"/><path d="M1 16v5M0.5 19.5h13M12.5 16v5" stroke="#000" stroke-width="1"/></svg>
<div style="left:588px;top:434px;width:42px;height:33px;background:#cccccc;"></div>
<div style="left:588px;top:434px;width:41px;height:1px;background:#666666;"></div>
<div style="left:588px;top:434px;width:1px;height:32px;background:#666666;"></div>
<div style="left:588px;top:465px;width:41px;height:1px;background:#666666;"></div>
<div style="left:628px;top:434px;width:1px;height:32px;background:#666666;"></div>
<div style="left:589px;top:435px;width:40px;height:1px;background:#ffffff;"></div>
<div style="left:589px;top:435px;width:1px;height:31px;background:#ffffff;"></div>
<div style="left:589px;top:466px;width:41px;height:1px;background:#ffffff;"></div>
<div style="left:629px;top:435px;width:1px;height:32px;background:#ffffff;"></div>
<div style="left:593px;top:439px;width:32px;height:23px;background:#c0c0c0;"></div>
<svg style="position:absolute;left:593px;top:439px" width="32" height="23"><defs><pattern id="dith" width="2" height="2" patternUnits="userSpaceOnUse"><rect width="1" height="1" fill="#000"/><rect x="1" y="1" width="1" height="1" fill="#000"/></pattern></defs><path d="M8 10h16v13h-13z" fill="url(#dith)"/><rect x="5" y="3" width="18" height="11" rx="1.5" fill="#000"/><rect x="6" y="4" width="3" height="9" fill="#999"/><circle cx="15.5" cy="8.5" r="4" fill="#000" stroke="#fff" stroke-width="1"/><circle cx="15.5" cy="8.5" r="2" fill="#fff"/><rect x="11" y="1" width="7" height="3" fill="#000"/></svg>
<div style="left:588px;top:467px;width:42px;height:33px;background:#cccccc;"></div>
<div style="left:588px;top:467px;width:41px;height:1px;background:#666666;"></div>
<div style="left:588px;top:467px;width:1px;height:32px;background:#666666;"></div>
<div style="left:588px;top:498px;width:41px;height:1px;background:#666666;"></div>
<div style="left:628px;top:467px;width:1px;height:32px;background:#666666;"></div>
<div style="left:589px;top:468px;width:40px;height:1px;background:#ffffff;"></div>
<div style="left:589px;top:468px;width:1px;height:31px;background:#ffffff;"></div>
<div style="left:589px;top:499px;width:41px;height:1px;background:#ffffff;"></div>
<div style="left:629px;top:468px;width:1px;height:32px;background:#ffffff;"></div>
<div style="left:593px;top:472px;width:32px;height:23px;background:#c0c0c0;"></div>
<svg style="position:absolute;left:593px;top:472px" width="32" height="23"><defs><pattern id="dith" width="2" height="2" patternUnits="userSpaceOnUse"><rect width="1" height="1" fill="#000"/><rect x="1" y="1" width="1" height="1" fill="#000"/></pattern></defs><path d="M8 8h18v12h-15z" fill="url(#dith)"/><rect x="5" y="4" width="11" height="9" fill="#000"/><rect x="6" y="5" width="8" height="1" fill="#fff"/><rect x="6" y="8" width="8" height="1" fill="#fff"/><rect x="6" y="5" width="1" height="4" fill="#fff"/><rect x="10" y="6" width="1" height="2" fill="#fff"/><rect x="15" y="1" width="7" height="14" fill="#000"/><rect x="17" y="2" width="1" height="12" fill="#fff"/></svg>
<div style="left:588px;top:500px;width:42px;height:33px;background:#cccccc;"></div>
<div style="left:588px;top:500px;width:41px;height:1px;background:#666666;"></div>
<div style="left:588px;top:500px;width:1px;height:32px;background:#666666;"></div>
<div style="left:588px;top:531px;width:41px;height:1px;background:#666666;"></div>
<div style="left:628px;top:500px;width:1px;height:32px;background:#666666;"></div>
<div style="left:589px;top:501px;width:40px;height:1px;background:#ffffff;"></div>
<div style="left:589px;top:501px;width:1px;height:31px;background:#ffffff;"></div>
<div style="left:589px;top:532px;width:41px;height:1px;background:#ffffff;"></div>
<div style="left:629px;top:501px;width:1px;height:32px;background:#ffffff;"></div>
<div style="left:593px;top:505px;width:32px;height:23px;background:#c0c0c0;"></div>
<svg style="position:absolute;left:593px;top:505px" width="32" height="23"><defs><pattern id="dith" width="2" height="2" patternUnits="userSpaceOnUse"><rect width="1" height="1" fill="#000"/><rect x="1" y="1" width="1" height="1" fill="#000"/></pattern></defs><path d="M12 5h16v15h-14z" fill="url(#dith)"/><rect x="3" y="1" width="19" height="6" rx="2" fill="#000"/><rect x="5" y="2" width="15" height="3" rx="1" fill="#fff"/><rect x="7" y="3" width="11" height="1" fill="#000"/><rect x="9" y="6" width="10" height="11" fill="#000"/><path d="M13.5 7v9M16.5 7v9M12 9.5h6M12 13.5h6" stroke="#fff" stroke-width="1"/></svg>
<div style="left:588px;top:533px;width:42px;height:33px;background:#cccccc;"></div>
<div style="left:588px;top:533px;width:41px;height:1px;background:#666666;"></div>
<div style="left:588px;top:533px;width:1px;height:32px;background:#666666;"></div>
<div style="left:588px;top:564px;width:41px;height:1px;background:#666666;"></div>
<div style="left:628px;top:533px;width:1px;height:32px;background:#666666;"></div>
<div style="left:589px;top:534px;width:40px;height:1px;background:#ffffff;"></div>
<div style="left:589px;top:534px;width:1px;height:31px;background:#ffffff;"></div>
<div style="left:589px;top:565px;width:41px;height:1px;background:#ffffff;"></div>
<div style="left:629px;top:534px;width:1px;height:32px;background:#ffffff;"></div>
<div style="left:593px;top:538px;width:32px;height:23px;background:#c0c0c0;"></div>
<svg style="position:absolute;left:593px;top:538px" width="32" height="23"><path d="M15.5 4v8.5M15.5 12.5h8M15.5 12.5l-4.5 4.5" fill="none" stroke="#000" stroke-width="1"/><path d="M13.5 6l2-4 2 4zM21 10.5l3.5 2-3.5 2z" fill="#000"/><rect x="10" y="16" width="2" height="2" fill="#000"/></svg>
<div style="left:588px;top:566px;width:42px;height:33px;background:#cccccc;"></div>
<div style="left:588px;top:566px;width:41px;height:1px;background:#666666;"></div>
<div style="left:588px;top:566px;width:1px;height:32px;background:#666666;"></div>
<div style="left:588px;top:597px;width:41px;height:1px;background:#666666;"></div>
<div style="left:628px;top:566px;width:1px;height:32px;background:#666666;"></div>
<div style="left:589px;top:567px;width:40px;height:1px;background:#ffffff;"></div>
<div style="left:589px;top:567px;width:1px;height:31px;background:#ffffff;"></div>
<div style="left:589px;top:598px;width:41px;height:1px;background:#ffffff;"></div>
<div style="left:629px;top:567px;width:1px;height:32px;background:#ffffff;"></div>
<div style="left:593px;top:571px;width:32px;height:23px;background:#c0c0c0;"></div>
<svg style="position:absolute;left:593px;top:571px" width="32" height="23"><defs><pattern id="dith" width="2" height="2" patternUnits="userSpaceOnUse"><rect width="1" height="1" fill="#000"/><rect x="1" y="1" width="1" height="1" fill="#000"/></pattern></defs><path d="M18 10l9 9v3l-9-9z" fill="url(#dith)"/><circle cx="13" cy="8.5" r="6" fill="none" stroke="#000" stroke-width="2"/><path d="M17.5 13.5l7 7" stroke="#000" stroke-width="4"/><path d="M18 14l6 6" stroke="#fff" stroke-width="1.5"/><rect x="9" y="6" width="3" height="3" fill="#fff" transform="rotate(45 10.5 7.5)"/></svg>
<div style="left:630px;top:69px;width:514px;height:762px;background:#000;"></div>
<svg style="position:absolute;left:630px;top:69px" width="514" height="762" viewBox="630 69 514 762"><polygon points="630,197 700,212 775,229 780,233 775,236 700,229 630,216" fill="#c8ffb0" /><polyline points="630,198.5 700,213 775,229.5" fill="none" stroke="#f0ffa8" stroke-width="3" stroke-linejoin="round" /><polyline points="630,203 700,217 770,231" fill="none" stroke="#a8a8ff" stroke-width="1.5" stroke-linejoin="round" stroke-dasharray="5 3"/><polyline points="630,206 700,220 770,232" fill="none" stroke="#f4f4ff" stroke-width="2" stroke-linejoin="round" /><polyline points="630,210 700,223 770,233" fill="none" stroke="#90ff90" stroke-width="4" stroke-linejoin="round" /><polyline points="630,214.5 700,227.5 770,235" fill="none" stroke="#f0ffa8" stroke-width="2.5" stroke-linejoin="round" /><polyline points="630,219 715,243.5 760,245" fill="none" stroke="#e8ffd8" stroke-width="1.1" stroke-linejoin="round" /><polyline points="630,222.5 715,243.1 760,245" fill="none" stroke="#f8fff0" stroke-width="1.1" stroke-linejoin="round" /><polyline points="630,226 715,242.7 760,245" fill="none" stroke="#e8ffd8" stroke-width="1.1" stroke-linejoin="round" /><polyline points="630,229.5 715,242.3 760,245" fill="none" stroke="#f8fff0" stroke-width="1.1" stroke-linejoin="round" /><polyline points="630,233 715,241.9 760,245" fill="none" stroke="#e8ffd8" stroke-width="1.1" stroke-linejoin="round" /><polyline points="630,236.5 715,241.5 760,245" fill="none" stroke="#f8fff0" stroke-width="1.1" stroke-linejoin="round" /><polyline points="630,243.5 655,243.5 700,243" fill="none" stroke="#a8a8ff" stroke-width="2.5" stroke-linejoin="round" /><polyline points="657,227 676,227 710,235.5 750,242 790,238 870,243.3 960,255" fill="none" stroke="#a8a8ff" stroke-width="2.5" stroke-linejoin="round" /><polyline points="745,220 775,218 785,218 830,226 870,231 1004,236 1144,231.6" fill="none" stroke="#a8a8ff" stroke-width="2.5" stroke-linejoin="round" /><polyline points="870,231 1004,236 1144,231.6" fill="none" stroke="#3030ff" stroke-width="2.5" stroke-linejoin="round" /><polyline points="745,226 870,230 900,236 1004,241.7 1144,242.4" fill="none" stroke="#c8c8ff" stroke-width="2.5" stroke-linejoin="round" /><polyline points="760,232 870,238.5 975,255 1004,251.7 1078,244.3" fill="none" stroke="#e0ff50" stroke-width="3" stroke-linejoin="round" /><polyline points="1078,244 1144,242.4" fill="none" stroke="#f4f4ff" stroke-width="2" stroke-linejoin="round" /><polyline points="790,244 870,258.5 1010,258" fill="none" stroke="#f0f8d0" stroke-width="3.5" stroke-linejoin="round" /><polyline points="1013,256.8 1144,261.8" fill="none" stroke="#a8a8ff" stroke-width="3" stroke-linejoin="round" /><polyline points="920,262 1004,265.4 1144,270.4" fill="none" stroke="#c0c0ff" stroke-width="4" stroke-linejoin="round" /><polyline points="920,265 1004,268 1144,273" fill="none" stroke="#50ff50" stroke-width="1" stroke-linejoin="round" /><polygon points="655,243 700,242 750,242.2 880,256.6 1004,274 1144,287 1144,307 1004,290 880,273 750,257 700,251 660,246" fill="#f0ffa8" /><polyline points="700,245 880,260 1004,277 1144,291" fill="none" stroke="#e8ff90" stroke-width="2" stroke-linejoin="round" stroke-dasharray="3 3"/><polyline points="710,243.5 880,262 1004,279.5 1144,294.5" fill="none" stroke="#a8a8ff" stroke-width="2.5" stroke-linejoin="round" /><polyline points="760,252 880,266 1004,283 1144,297" fill="none" stroke="#ff9090" stroke-width="1.5" stroke-linejoin="round" stroke-dasharray="4 6"/><polyline points="760,254 880,268 1004,285.5 1144,300" fill="none" stroke="#50ff50" stroke-width="2.2" stroke-linejoin="round" /><polyline points="760,256 880,271 1004,288 1144,304" fill="none" stroke="#e8ff60" stroke-width="3.5" stroke-linejoin="round" /><polyline points="651,201 665,195.5 687,192.8 760,194.5 880,196.5 924,195.5" fill="none" stroke="#e0ff50" stroke-width="3" stroke-linejoin="round" /><polyline points="656,202.5 670,198 690,195.5 760,196.5 880,197.5 924,197" fill="none" stroke="#a8a8ff" stroke-width="2.2" stroke-linejoin="round" /><polyline points="661,203.5 675,199.5 695,197 760,197.5" fill="none" stroke="#50ff50" stroke-width="1" stroke-linejoin="round" /><polyline points="840,197 924,196" fill="none" stroke="#1818ff" stroke-width="3" stroke-linejoin="round" /><polyline points="935,196 970,203 1004,209.5 1060,216 1144,222" fill="none" stroke="#f4f4ff" stroke-width="4" stroke-linejoin="round" /><polyline points="935,197.5 970,204.5 1004,211.5 1060,219 1144,224" fill="none" stroke="#1818ff" stroke-width="3" stroke-linejoin="round" /><polyline points="925,196 935,196.5" fill="none" stroke="#e0ff50" stroke-width="3" stroke-linejoin="round" /><polyline points="945,197 962,198" fill="none" stroke="#50ff50" stroke-width="3" stroke-linejoin="round" /><polyline points="878.5,230.6 963.6,202" fill="none" stroke="#f0ffd8" stroke-width="6" stroke-linejoin="round" /><polyline points="880,230 955,201" fill="none" stroke="#1818ff" stroke-width="2.5" stroke-linejoin="round" /><polyline points="630,549.3 1144,331.3" fill="none" stroke="#f4ffaa" stroke-width="3" stroke-linejoin="round" /><polyline points="1144,499.2 1029.2,638.4 1064.5,831" fill="none" stroke="#f4ffaa" stroke-width="2.5" stroke-linejoin="round" /><polyline points="678,836 782.8,601.7 1144,373.6" fill="none" stroke="#6e6ef0" stroke-width="2.2" stroke-linejoin="round" /><polyline points="662,836 726.6,700 738,672" fill="none" stroke="#ffaaaa" stroke-width="2" stroke-linejoin="round" stroke-dasharray="6 6"/><polyline points="738,672 768,611" fill="none" stroke="#1818ff" stroke-width="2.5" stroke-linejoin="round" /><polyline points="738,672 768,611" fill="none" stroke="#ffaaaa" stroke-width="1.5" stroke-linejoin="round" stroke-dasharray="4 8"/><polyline points="770,606 782,600 1144,372" fill="none" stroke="#ffaaaa" stroke-width="1" stroke-linejoin="round" stroke-dasharray="2 6"/><polyline points="680,605.3 767.7,610.5" fill="none" stroke="#ff0000" stroke-width="3" stroke-linejoin="round" /><polyline points="762.9,527.5 768.9,609.6" fill="none" stroke="#00ff00" stroke-width="3" stroke-linejoin="round" /><polyline points="769.6,610 807.2,565.8" fill="none" stroke="#ff00ff" stroke-width="3" stroke-linejoin="round" /><polyline points="945,458.6 992.8,469.1" fill="none" stroke="#ff0000" stroke-width="3" stroke-linejoin="round" /><polyline points="997,415 994,468.2" fill="none" stroke="#00ff00" stroke-width="3" stroke-linejoin="round" /><polyline points="1105,373.6 1137.3,376.8" fill="none" stroke="#ff0000" stroke-width="3" stroke-linejoin="round" /><polyline points="1142.3,344.5 1137.5,376" fill="none" stroke="#00ff00" stroke-width="3" stroke-linejoin="round" /></svg>
<div style="left:0px;top:832px;width:1151px;height:1px;background:#d4d0c8;"></div>
<div style="left:1px;top:833px;width:1150px;height:1px;background:#d4d0c8;"></div>
<div style="left:0px;top:834px;width:1152px;height:1px;background:#404040;"></div>
<div style="left:0px;top:835px;width:1152px;height:1px;background:#404040;"></div>
<div style="left:1px;top:1px;width:1px;height:833px;background:#ffffff;"></div></body></html>
